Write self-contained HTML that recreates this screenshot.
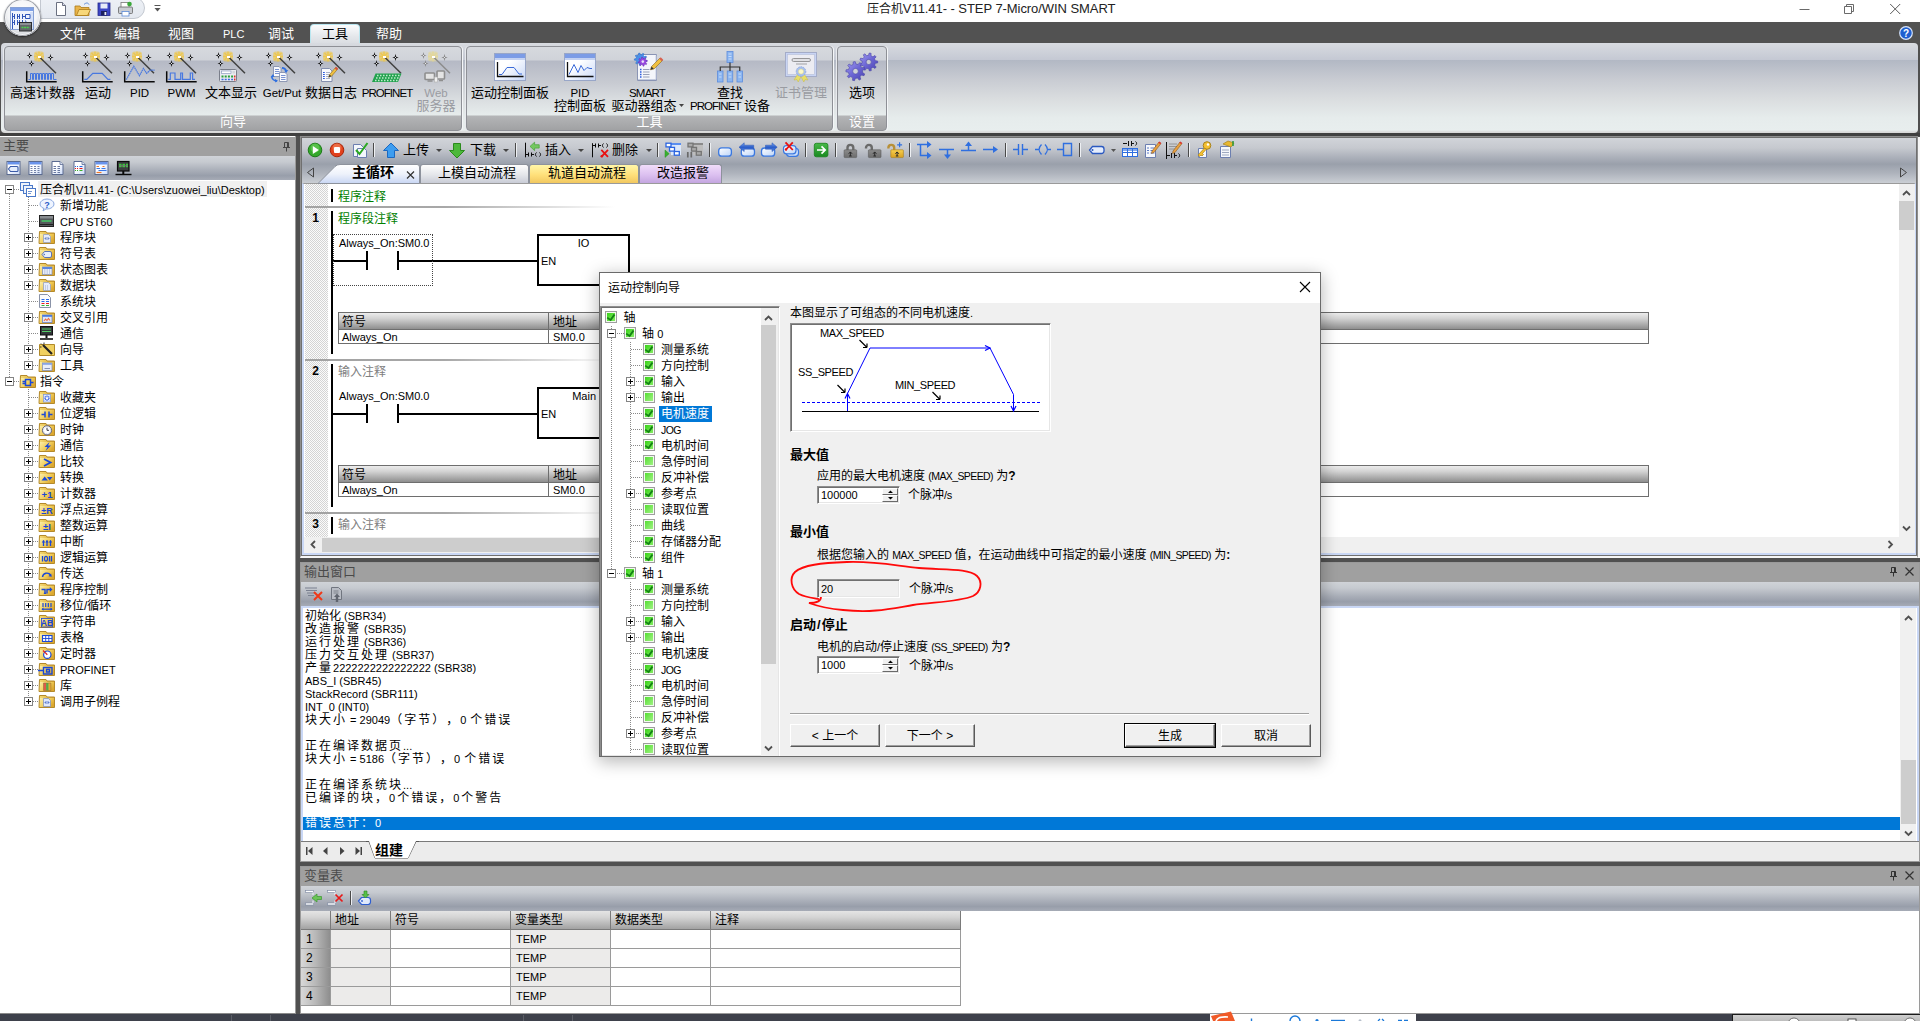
<!DOCTYPE html><html lang="zh-CN"><head><meta charset="utf-8"><title>压合机V11.41- - STEP 7-Micro/WIN SMART</title><style>

*{box-sizing:border-box;margin:0;padding:0}
html,body{width:1920px;height:1021px;overflow:hidden;background:#505050}
body{position:relative;font-family:"Liberation Sans","Noto Sans CJK SC",sans-serif;font-size:12px;color:#000;line-height:1}
.a{position:absolute}
.t{position:absolute;white-space:nowrap;line-height:16px;height:16px}
.c{text-align:center}
svg{position:absolute;overflow:visible}


#title{left:0;top:0;width:1920px;height:22px;background:#fff}
#menubar{left:0;top:22px;width:1920px;height:21px;background:#525252}
.mi{position:absolute;top:25px;height:17px;line-height:17px;font-size:13px;color:#fff;white-space:nowrap}
#ribbon{left:1px;top:43px;width:1917px;height:90px;border-radius:4px;background:linear-gradient(#d8dbe0 0,#c5c9d4 16.500px,#b2b8c4 17px,#c8cbd2 36px,#dadddf 56px,#e6ecec 75px,#e8eeee 87px,#d8d8d8 89px);}
.rg{position:absolute;top:46px;height:85px;border:1px solid #8e9096;border-radius:4px;background:linear-gradient(#d6d9de 0,#d0d3d9 13px,#b5b9c5 14px,#c8cbd2 36px,#dde1e3 56px,#e6ecec 68px,#b4b5b7 69px,#9fa0a2 84px);box-shadow:1px 0 0 #f4f6f8,-1px 0 0 #e8eaee}
.rcap{position:absolute;top:114px;height:16px;line-height:16px;font-size:13px;color:#fff;text-align:center;white-space:nowrap}
.rl{position:absolute;font-size:13px;line-height:13px;text-align:center;white-space:nowrap;color:#000;transform:translateX(-50%)}
.rl.g{color:#9a9ca2}


#lp{left:0;top:136px;width:296px;height:878px;background:#fff;border-right:1px solid #9a9a9a;border-bottom:1px solid #8a8a8a}
.ph{position:absolute;background:#a0a0a0;color:#4a4a4a;font-size:13px;line-height:18px;height:19px;padding-left:3px;white-space:nowrap}
.tb{position:absolute;background:linear-gradient(#d0d3d8 0,#c6cad0 25%,#a9aeb8 60%,#989eaa 82%,#a6abb6 100%)}
.tr{position:absolute;left:0;height:16px;line-height:18px;font-size:12px;white-space:nowrap}
.tr span.l{font-size:11px}
.ex{position:absolute;width:9px;height:9px;border:1px solid #848484;background:#fff}
.ex:before{content:"";position:absolute;left:1px;top:3px;width:5px;height:1px;background:#000}
.ex.p:after{content:"";position:absolute;left:3px;top:1px;width:1px;height:5px;background:#000}
.dv{position:absolute;width:1px;background-image:linear-gradient(#8a8a8a 50%,transparent 50%);background-size:1px 2px}
.dh{position:absolute;height:1px;background-image:linear-gradient(90deg,#8a8a8a 50%,transparent 50%);background-size:2px 1px}


#ed{left:300px;top:136px;width:1618px;height:422px;background:#fff;border:1px solid #8e8e8e;border-bottom:2px solid #f6f6f6;box-shadow:inset 0 0 0 1px #707070}
#edc{left:302px;top:183px;width:1614px;height:372px;border:2px solid #c9d7f5;border-top:1px solid #9a9a9a}
#edtb{left:302px;top:138px;width:1614px;height:45px;background:linear-gradient(#d1d4d9 0,#c6c9cf 22%,#a9aeb8 45%,#9aa0ab 58%,#aeb3bc 78%,#caced4 100%)}
.sep{position:absolute;top:143px;width:1px;height:14px;background:#4a4a4a;box-shadow:1px 0 0 #eef0f3}
.tbt{position:absolute;top:141px;height:17px;line-height:17px;font-size:13px;white-space:nowrap}
.dd{position:absolute;top:149px;width:0;height:0;border:3px solid transparent;border-top:3px solid #444;border-bottom:0}
.tab{position:absolute;top:164px;height:19px;border:1px solid #8d929c;border-bottom:0;border-radius:3px 3px 0 0}
.tabt{position:absolute;top:164px;height:17px;line-height:17px;font-size:13px;white-space:nowrap}
.lad{position:absolute;background:#000}
.st{position:absolute;border:1px solid #6e6e6e;background:#fff}
.sth{position:absolute;height:17px;background:linear-gradient(#ececec 0,#d2d2d2 35%,#8e8e8e 100%);border-bottom:1px solid #6e6e6e}
.lt{position:absolute;white-space:nowrap;font-size:11px;line-height:14px;height:14px}
.ct{position:absolute;white-space:nowrap;font-size:12px;line-height:14px;height:14px}
.vs{position:absolute;background:#f0f0f0}
.th{position:absolute;background:#cdcdcd}


.ol{text-spacing-trim:space-all;position:absolute;left:305px;height:13px;line-height:13px;font-size:12px;white-space:nowrap;letter-spacing:2px}
.ol i{font-style:normal;font-size:11px;letter-spacing:0}
.vh{position:absolute;top:911px;height:19px;line-height:18px;font-size:12px;padding-left:4px;white-space:nowrap;background:linear-gradient(#e4e4e4 0,#d4d4d4 35%,#a2a2a2 100%);border-right:1px solid #7a7a7a;border-bottom:1px solid #7a7a7a}
.vc{position:absolute;height:19px;line-height:18px;font-size:11px;padding-left:5px;white-space:nowrap;border-right:1px solid #9a9a9a;border-bottom:1px solid #9a9a9a;background:#fff}
.vn{background:linear-gradient(90deg,#d8d8d8 0,#b8b8b8 50%,#8e8e8e 100%);font-size:12px;padding-left:5px}
.vg{background:#ecebea}


#dlg{left:599px;top:272px;width:722px;height:485px;background:#f0f0f0;border:1px solid #6a6a6a;box-shadow:0 4px 16px 1px rgba(0,0,0,.28)}
#dlgt{left:600px;top:273px;width:720px;height:30px;background:#fff}
.dt{position:absolute;white-space:nowrap;font-size:12px;line-height:16px;height:16px}
.dt i{font-style:normal;font-size:11px;letter-spacing:-.2px}
.dt u{text-decoration:none;font-size:10.500px;letter-spacing:-.6px}
.db{font-weight:bold}
.cb{position:absolute;width:12px;height:12px;border:1px solid #9e9e9e;background:linear-gradient(135deg,#4cdc2a,#aaf48e);box-shadow:inset 0 0 0 1px #f2fbee}
.cb.k{background:linear-gradient(135deg,#2fd010,#8eee6c)}
.cb.k:after{content:"";position:absolute;left:0;top:0;width:10px;height:10px;background:#148214;clip-path:polygon(1.700px 4.900px,4.300px 6.800px,7.700px 1.900px,9.300px 3px,4.800px 9.300px,.700px 6.300px)}
.sunk{position:absolute;background:#fff;border:1px solid;border-color:#8e8e8e #fff #fff #8e8e8e;box-shadow:inset 1px 1px 0 #707070,inset -1px -1px 0 #e6e6e6}
.btn{position:absolute;height:23px;line-height:23px;font-size:12px;text-align:center;background:#f0f0f0;border:1px solid;border-color:#fff #5a5a5a #5a5a5a #fff;box-shadow:inset -1px -1px 0 #a0a0a0}

</style></head><body>
<div class="a" id="title"></div>
<div class="t" style="left:867px;top:0px;font-size:13px;line-height:17px;height:17px;color:#222;letter-spacing:-.06px"><span style="font-size:12px">压合机</span>V11.41- - STEP 7-Micro/WIN SMART</div>
<svg style="left:1790px;top:0" width="130" height="22" viewBox="0 0 130 22"><path d="M9.500 9.500h10" stroke="#6a6a6a" stroke-width="1" fill="none"/><path d="M54.500 6.500h7v7h-7zM56.500 6.500v-2h7v7h-2" stroke="#6a6a6a" stroke-width="1" fill="none"/><path d="M100.200 4l10 10M110.200 4l-10 10" stroke="#5a5a5a" stroke-width="1" fill="none"/></svg>
<div class="a" id="menubar"></div>
<div class="a" style="left:40px;top:-3px;width:105px;height:22px;border:1px solid #c3c8d0;border-radius:0 11px 11px 0;background:linear-gradient(#eef1f6,#e4e8ef)"></div>
<svg style="left:54px;top:1px" width="110" height="17" viewBox="0 0 110 17"><path d="M2.5 1.5h6l3 3v10h-9z" fill="#fff" stroke="#6a7080"/><path d="M8.5 1.5v3h3" fill="#dde" stroke="#6a7080"/><path d="M21 5h5l1 1.5h8v8h-14z" fill="#e9b44a" stroke="#a97a18" stroke-width=".8"/><path d="M22.5 14.5l2.5-6h11.5l-3 6z" fill="#f7d77a" stroke="#a97a18" stroke-width=".8"/><path d="M30 3.5c2-2 4-2 5 0" stroke="#5a8ad8" fill="none"/><rect x="44" y="2" width="12" height="12.5" fill="#3b45c4" stroke="#23298a" stroke-width=".8"/><rect x="46.5" y="2.5" width="7" height="5" fill="#e8ecf8"/><rect x="47" y="10" width="6" height="4.5" fill="#1c2060"/><rect x="50.5" y="11" width="1.8" height="3" fill="#e8ecf8"/><rect x="67" y="1.500" width="8" height="5" fill="#fff" stroke="#777" stroke-width=".8"/><rect x="64.5" y="6" width="14" height="6.5" rx="1" fill="#c9ccd2" stroke="#666" stroke-width=".8"/><rect x="68" y="10.5" width="7" height="4.5" fill="#fff" stroke="#5a8ad8" stroke-width=".8"/><circle cx="75.500" cy="3" r="2.300" fill="#3aa83a"/></svg>
<svg style="left:153px;top:4px" width="10" height="10" viewBox="0 0 10 10"><path d="M1.5 1.500h6" stroke="#555"/><path d="M1.500 4h6l-3 3.500z" fill="#555"/></svg>
<div class="a" style="left:4px;top:-1px;width:37px;height:37px;border-radius:50%;background:radial-gradient(circle at 50% 40%,#fff 0,#f4f5f7 50%,#d4d7dc 72%,#a4a7ae 92%,#8e9198 100%);box-shadow:0 1px 2px rgba(0,0,0,.6),inset 0 0 0 1px #9a9da4,inset 0 0 0 2px #f4f5f7"></div>
<svg style="left:10px;top:6px" width="24" height="26" viewBox="0 0 24 26"><rect x=".5" y="1.500" width="23" height="22" fill="#eef3fc" stroke="#86a0d4"/><rect x="1" y="2" width="22" height="3" fill="#7d9fe6"/><path d="M20 6h3v17h-3z" fill="#d4e0f8"/><path d="M2.500 7v16M2.500 10.500h2M4.500 8v5M7.500 8v5M7.500 10.500h2M9.500 8v5M12.500 8v5M12.500 10.500h3M15.500 8.500h4.500v4h-4.500zM2.500 16.500h2M4.500 14v5M7.500 14v5M7.500 16.500h2M9.500 14v5M12.500 14v5M12.500 16.500h1.500M15 14.500c1.500 1 2 2.500 .5 4" stroke="#2f55b8" fill="none"/><rect x="9.500" y="16.500" width="12" height="8.500" fill="#63676b" stroke="#2c2e30"/><rect x="10" y="17" width="11" height="2" fill="#8c9094"/><path d="M11.500 21.500h8" stroke="#4cd04c" stroke-width="1.600" stroke-dasharray="2 .6"/></svg>
<div class="mi" style="left:60px">文件</div>
<div class="mi" style="left:114px">编辑</div>
<div class="mi" style="left:168px">视图</div>
<div class="mi" style="left:268px">调试</div>
<div class="mi" style="left:376px">帮助</div>
<div class="mi" style="left:223px;font-size:11px;top:26px">PLC</div>
<div class="a" style="left:310px;top:24px;width:50px;height:20px;border-radius:4px 4px 0 0;border:1px solid #b9e6f0;border-bottom:0;background:linear-gradient(#fbfcfd,#e4e7eb 60%,#d9dce1)"></div>
<div class="mi" style="left:322px;color:#000">工具</div>
<svg style="left:1899px;top:26px" width="14" height="14" viewBox="0 0 14 14"><circle cx="7" cy="7" r="6.300" fill="#1f5fd0" stroke="#d8e4fa" stroke-width="1.200"/><text x="7" y="11" font-size="10" font-weight="bold" fill="#fff" text-anchor="middle" font-family="Liberation Sans,sans-serif">?</text></svg>
<div class="a" id="ribbon"></div>
<div class="rg" style="left:4px;width:458px"></div>
<div class="rg" style="left:466px;width:367px"></div>
<div class="rg" style="left:837px;width:50px"></div>
<div class="rcap" style="left:4px;width:458px">向导</div>
<div class="rcap" style="left:466px;width:367px">工具</div>
<div class="rcap" style="left:837px;width:50px">设置</div>
<div class="rl" style="left:42.5px;top:86px;font-size:13px">高速计数器</div>
<div class="rl" style="left:98px;top:86px;font-size:13px">运动</div>
<div class="rl" style="left:139.5px;top:86.5px;font-size:11.5px;letter-spacing:-.1px">PID</div>
<div class="rl" style="left:181.5px;top:86.5px;font-size:11.5px;letter-spacing:-.1px">PWM</div>
<div class="rl" style="left:231px;top:86px;font-size:13px">文本显示</div>
<div class="rl" style="left:282px;top:86.5px;font-size:11.5px;letter-spacing:-.1px">Get/Put</div>
<div class="rl" style="left:331px;top:86px;font-size:13px">数据日志</div>
<div class="rl" style="left:387px;top:86.5px;font-size:11.5px;letter-spacing:-.95px">PROFINET</div>
<div class="rl g" style="left:436px;top:87px;font-size:11.500px">Web</div><div class="rl g" style="left:436px;top:98.500px">服务器</div>
<div class="rl" style="left:510px;top:86px">运动控制面板</div>
<div class="rl" style="left:580px;top:87px;font-size:11.500px">PID</div><div class="rl" style="left:580px;top:98.500px">控制面板</div>
<div class="rl" style="left:647px;top:87px;font-size:11.500px;letter-spacing:-.8px">SMART</div><div class="rl" style="left:644px;top:98.500px">驱动器组态</div>
<svg style="left:679px;top:104px" width="6" height="4" viewBox="0 0 6 4"><path d="M0 0h5l-2.500 3z" fill="#444"/></svg>
<div class="rl" style="left:730px;top:86px">查找</div><div class="rl" style="left:730px;top:98.500px"><span style="font-size:11.500px;letter-spacing:-.95px">PROFINET</span> 设备</div>
<div class="rl g" style="left:801px;top:86px">证书管理</div>
<div class="rl" style="left:862px;top:86px">选项</div>
<svg style="left:26px;top:51px" width="32" height="32" viewBox="0 0 32 32"><rect x="8" y=".5" width="10" height="10" rx="2.500" fill="#f2c63c" opacity=".5"/><path d="M13 .5v10M8 5.500h10M9.500 2l7 7M16.500 2l-7 7" stroke="#f2c63c" stroke-width="1.500" opacity=".7"/><path d="M14 6.500L30 22.300" stroke="#404040" stroke-width="1.500" fill="none"/><rect x="12" y="5" width="3" height="2" fill="#fff"/><path d="M3.5 0.8999999999999999L4.2 3.8L6.5 4.5L4.2 5.2L3.5 8.1L2.8 5.2L0.4999999999999999 4.5L2.8 3.8Z" fill="#1a1a1a"/><rect x="3.0" y="4.0" width="1" height="1" fill="#e8eaee"/><path d="M5.5 8.9L6.2 11.8L8.5 12.5L6.2 13.2L5.5 16.1L4.8 13.2L2.5 12.5L4.8 11.8Z" fill="#1a1a1a"/><rect x="5.0" y="12.0" width="1" height="1" fill="#e8eaee"/><path d="M24.5 2.7L25.2 5.8L27.7 6.5L25.2 7.2L24.5 10.3L23.8 7.2L21.3 6.5L23.8 5.8Z" fill="#1a1a1a"/><rect x="24.0" y="6.0" width="1" height="1" fill="#e8eaee"/><path d="M.7 20.300v10.400h30" stroke="#0a0a0a" stroke-width="1.500" fill="none"/></svg>
<svg style="left:82px;top:51px" width="32" height="32" viewBox="0 0 32 32"><rect x="8" y=".5" width="10" height="10" rx="2.500" fill="#f2c63c" opacity=".5"/><path d="M13 .5v10M8 5.500h10M9.500 2l7 7M16.500 2l-7 7" stroke="#f2c63c" stroke-width="1.500" opacity=".7"/><path d="M14 6.500L30 22.300" stroke="#404040" stroke-width="1.500" fill="none"/><rect x="12" y="5" width="3" height="2" fill="#fff"/><path d="M3.5 0.8999999999999999L4.2 3.8L6.5 4.5L4.2 5.2L3.5 8.1L2.8 5.2L0.4999999999999999 4.5L2.8 3.8Z" fill="#1a1a1a"/><rect x="3.0" y="4.0" width="1" height="1" fill="#e8eaee"/><path d="M5.5 8.9L6.2 11.8L8.5 12.5L6.2 13.2L5.5 16.1L4.8 13.2L2.5 12.5L4.8 11.8Z" fill="#1a1a1a"/><rect x="5.0" y="12.0" width="1" height="1" fill="#e8eaee"/><path d="M24.5 2.7L25.2 5.8L27.7 6.5L25.2 7.2L24.5 10.3L23.8 7.2L21.3 6.5L23.8 5.8Z" fill="#1a1a1a"/><rect x="24.0" y="6.0" width="1" height="1" fill="#e8eaee"/><path d="M.7 20.300v10.400h30" stroke="#0a0a0a" stroke-width="1.500" fill="none"/></svg>
<svg style="left:124px;top:51px" width="32" height="32" viewBox="0 0 32 32"><rect x="8" y=".5" width="10" height="10" rx="2.500" fill="#f2c63c" opacity=".5"/><path d="M13 .5v10M8 5.500h10M9.500 2l7 7M16.500 2l-7 7" stroke="#f2c63c" stroke-width="1.500" opacity=".7"/><path d="M14 6.500L30 22.300" stroke="#404040" stroke-width="1.500" fill="none"/><rect x="12" y="5" width="3" height="2" fill="#fff"/><path d="M3.5 0.8999999999999999L4.2 3.8L6.5 4.5L4.2 5.2L3.5 8.1L2.8 5.2L0.4999999999999999 4.5L2.8 3.8Z" fill="#1a1a1a"/><rect x="3.0" y="4.0" width="1" height="1" fill="#e8eaee"/><path d="M5.5 8.9L6.2 11.8L8.5 12.5L6.2 13.2L5.5 16.1L4.8 13.2L2.5 12.5L4.8 11.8Z" fill="#1a1a1a"/><rect x="5.0" y="12.0" width="1" height="1" fill="#e8eaee"/><path d="M24.5 2.7L25.2 5.8L27.7 6.5L25.2 7.2L24.5 10.3L23.8 7.2L21.3 6.5L23.8 5.8Z" fill="#1a1a1a"/><rect x="24.0" y="6.0" width="1" height="1" fill="#e8eaee"/><path d="M.7 20.300v10.400h30" stroke="#0a0a0a" stroke-width="1.500" fill="none"/></svg>
<svg style="left:166px;top:51px" width="32" height="32" viewBox="0 0 32 32"><rect x="8" y=".5" width="10" height="10" rx="2.500" fill="#f2c63c" opacity=".5"/><path d="M13 .5v10M8 5.500h10M9.500 2l7 7M16.500 2l-7 7" stroke="#f2c63c" stroke-width="1.500" opacity=".7"/><path d="M14 6.500L30 22.300" stroke="#404040" stroke-width="1.500" fill="none"/><rect x="12" y="5" width="3" height="2" fill="#fff"/><path d="M3.5 0.8999999999999999L4.2 3.8L6.5 4.5L4.2 5.2L3.5 8.1L2.8 5.2L0.4999999999999999 4.5L2.8 3.8Z" fill="#1a1a1a"/><rect x="3.0" y="4.0" width="1" height="1" fill="#e8eaee"/><path d="M5.5 8.9L6.2 11.8L8.5 12.5L6.2 13.2L5.5 16.1L4.8 13.2L2.5 12.5L4.8 11.8Z" fill="#1a1a1a"/><rect x="5.0" y="12.0" width="1" height="1" fill="#e8eaee"/><path d="M24.5 2.7L25.2 5.8L27.7 6.5L25.2 7.2L24.5 10.3L23.8 7.2L21.3 6.5L23.8 5.8Z" fill="#1a1a1a"/><rect x="24.0" y="6.0" width="1" height="1" fill="#e8eaee"/><path d="M.7 20.300v10.400h30" stroke="#0a0a0a" stroke-width="1.500" fill="none"/></svg>
<svg style="left:215px;top:51px" width="32" height="32" viewBox="0 0 32 32"><rect x="8" y=".5" width="10" height="10" rx="2.500" fill="#f2c63c" opacity=".5"/><path d="M13 .5v10M8 5.500h10M9.500 2l7 7M16.500 2l-7 7" stroke="#f2c63c" stroke-width="1.500" opacity=".7"/><path d="M14 6.500L30 22.300" stroke="#404040" stroke-width="1.500" fill="none"/><rect x="12" y="5" width="3" height="2" fill="#fff"/><path d="M3.5 0.8999999999999999L4.2 3.8L6.5 4.5L4.2 5.2L3.5 8.1L2.8 5.2L0.4999999999999999 4.5L2.8 3.8Z" fill="#1a1a1a"/><rect x="3.0" y="4.0" width="1" height="1" fill="#e8eaee"/><path d="M5.5 8.9L6.2 11.8L8.5 12.5L6.2 13.2L5.5 16.1L4.8 13.2L2.5 12.5L4.8 11.8Z" fill="#1a1a1a"/><rect x="5.0" y="12.0" width="1" height="1" fill="#e8eaee"/><path d="M24.5 2.7L25.2 5.8L27.7 6.5L25.2 7.2L24.5 10.3L23.8 7.2L21.3 6.5L23.8 5.8Z" fill="#1a1a1a"/><rect x="24.0" y="6.0" width="1" height="1" fill="#e8eaee"/></svg>
<svg style="left:265px;top:51px" width="32" height="32" viewBox="0 0 32 32"><rect x="8" y=".5" width="10" height="10" rx="2.500" fill="#f2c63c" opacity=".5"/><path d="M13 .5v10M8 5.500h10M9.500 2l7 7M16.500 2l-7 7" stroke="#f2c63c" stroke-width="1.500" opacity=".7"/><path d="M14 6.500L30 22.300" stroke="#404040" stroke-width="1.500" fill="none"/><rect x="12" y="5" width="3" height="2" fill="#fff"/><path d="M3.5 0.8999999999999999L4.2 3.8L6.5 4.5L4.2 5.2L3.5 8.1L2.8 5.2L0.4999999999999999 4.5L2.8 3.8Z" fill="#1a1a1a"/><rect x="3.0" y="4.0" width="1" height="1" fill="#e8eaee"/><path d="M5.5 8.9L6.2 11.8L8.5 12.5L6.2 13.2L5.5 16.1L4.8 13.2L2.5 12.5L4.8 11.8Z" fill="#1a1a1a"/><rect x="5.0" y="12.0" width="1" height="1" fill="#e8eaee"/><path d="M24.5 2.7L25.2 5.8L27.7 6.5L25.2 7.2L24.5 10.3L23.8 7.2L21.3 6.5L23.8 5.8Z" fill="#1a1a1a"/><rect x="24.0" y="6.0" width="1" height="1" fill="#e8eaee"/></svg>
<svg style="left:315px;top:51px" width="32" height="32" viewBox="0 0 32 32"><rect x="8" y=".5" width="10" height="10" rx="2.500" fill="#f2c63c" opacity=".5"/><path d="M13 .5v10M8 5.500h10M9.500 2l7 7M16.500 2l-7 7" stroke="#f2c63c" stroke-width="1.500" opacity=".7"/><path d="M14 6.500L30 22.300" stroke="#404040" stroke-width="1.500" fill="none"/><rect x="12" y="5" width="3" height="2" fill="#fff"/><path d="M3.5 0.8999999999999999L4.2 3.8L6.5 4.5L4.2 5.2L3.5 8.1L2.8 5.2L0.4999999999999999 4.5L2.8 3.8Z" fill="#1a1a1a"/><rect x="3.0" y="4.0" width="1" height="1" fill="#e8eaee"/><path d="M5.5 8.9L6.2 11.8L8.5 12.5L6.2 13.2L5.5 16.1L4.8 13.2L2.5 12.5L4.8 11.8Z" fill="#1a1a1a"/><rect x="5.0" y="12.0" width="1" height="1" fill="#e8eaee"/><path d="M24.5 2.7L25.2 5.8L27.7 6.5L25.2 7.2L24.5 10.3L23.8 7.2L21.3 6.5L23.8 5.8Z" fill="#1a1a1a"/><rect x="24.0" y="6.0" width="1" height="1" fill="#e8eaee"/></svg>
<svg style="left:371px;top:51px" width="32" height="32" viewBox="0 0 32 32"><rect x="8" y=".5" width="10" height="10" rx="2.500" fill="#f2c63c" opacity=".5"/><path d="M13 .5v10M8 5.500h10M9.500 2l7 7M16.500 2l-7 7" stroke="#f2c63c" stroke-width="1.500" opacity=".7"/><path d="M14 6.500L30 22.300" stroke="#404040" stroke-width="1.500" fill="none"/><rect x="12" y="5" width="3" height="2" fill="#fff"/><path d="M3.5 0.8999999999999999L4.2 3.8L6.5 4.5L4.2 5.2L3.5 8.1L2.8 5.2L0.4999999999999999 4.5L2.8 3.8Z" fill="#1a1a1a"/><rect x="3.0" y="4.0" width="1" height="1" fill="#e8eaee"/><path d="M5.5 8.9L6.2 11.8L8.5 12.5L6.2 13.2L5.5 16.1L4.8 13.2L2.5 12.5L4.8 11.8Z" fill="#1a1a1a"/><rect x="5.0" y="12.0" width="1" height="1" fill="#e8eaee"/><path d="M24.5 2.7L25.2 5.8L27.7 6.5L25.2 7.2L24.5 10.3L23.8 7.2L21.3 6.5L23.8 5.8Z" fill="#1a1a1a"/><rect x="24.0" y="6.0" width="1" height="1" fill="#e8eaee"/></svg>
<svg style="left:420px;top:51px" width="32" height="32" viewBox="0 0 32 32"><rect x="8" y=".5" width="10" height="10" rx="2.500" fill="#e6d890" opacity=".5"/><path d="M13 .5v10M8 5.500h10M9.500 2l7 7M16.500 2l-7 7" stroke="#e6d890" stroke-width="1.500" opacity=".7"/><path d="M14 6.500L30 22.300" stroke="#8c8c8c" stroke-width="1.500" fill="none"/><rect x="12" y="5" width="3" height="2" fill="#fff"/><path d="M3.5 0.8999999999999999L4.2 3.8L6.5 4.5L4.2 5.2L3.5 8.1L2.8 5.2L0.4999999999999999 4.5L2.8 3.8Z" fill="#8a8a8a"/><rect x="3.0" y="4.0" width="1" height="1" fill="#e8eaee"/><path d="M5.5 8.9L6.2 11.8L8.5 12.5L6.2 13.2L5.5 16.1L4.8 13.2L2.5 12.5L4.8 11.8Z" fill="#8a8a8a"/><rect x="5.0" y="12.0" width="1" height="1" fill="#e8eaee"/><path d="M24.5 2.7L25.2 5.8L27.7 6.5L25.2 7.2L24.5 10.3L23.8 7.2L21.3 6.5L23.8 5.8Z" fill="#8a8a8a"/><rect x="24.0" y="6.0" width="1" height="1" fill="#e8eaee"/></svg>
<svg style="left:26px;top:51px" width="32" height="32" viewBox="0 0 32 32"><path d="M2.500 28.500H4.5V22.500H6.5V28.500H7.5V22.500H9.5V28.500H10.5V22.500H12.5V28.500H13.5V22.500H15.5V28.500H16.5V22.500H18.5V28.500H19.5V22.500H21.5V28.500H22.5V22.500H24.5V28.500H25.5V22.500H27.5V28.500H30.500" stroke="#4878e0" stroke-width="1" fill="none"/></svg>
<svg style="left:82px;top:51px" width="32" height="32" viewBox="0 0 32 32"><path d="M2.300 28.300h2.500l6-6h9.400l5.700 6h2.500" stroke="#4878e0" stroke-width="1.200" fill="none"/></svg>
<svg style="left:124px;top:51px" width="32" height="32" viewBox="0 0 32 32"><path d="M2.300 28.600l7.500-13.300 5.700 9.400 3.900-7.300 3.200 4.900 3.600-3.100h4.400" stroke="#4878e0" stroke-width="1.200" fill="none" stroke-dasharray="1.600 .5"/></svg>
<svg style="left:166px;top:51px" width="32" height="32" viewBox="0 0 32 32"><path d="M2.300 28.300h2v-6.300h4.700v6.300h5.700v-6.300h1.800v6.300h7.800v-6.300h2.300v6.300h2.400" stroke="#4878e0" stroke-width="1.200" fill="none"/></svg>
<svg style="left:219px;top:69px" width="18" height="13" viewBox="0 0 18 13"><rect x=".5" y=".5" width="17" height="12" rx="1" fill="#e9ebf0" stroke="#7a7e8a"/><rect x="2.500" y="2" width="9.500" height="2.500" fill="#fff" stroke="#7a8cb8" stroke-width=".6"/><rect x="13.500" y="2" width="2.500" height="2.500" fill="#d4d6dc"/><path d="M2.500 7.500h2M5.700 7.500h2M8.900 7.500h2M12.100 7.500h2" stroke="#2aa03a" stroke-width="1.900"/><path d="M15 7.500h1.500M15 10.500h1.500" stroke="#e03030" stroke-width="1.900"/><path d="M2.500 10.500h2M5.700 10.500h2M8.900 10.500h2M12.100 10.500h2" stroke="#3a6ae0" stroke-width="1.700"/></svg>
<svg style="left:270px;top:66px" width="18" height="16" viewBox="0 0 18 16"><path d="M3.500 .5h5.500l2 2v8h-7.500z" fill="#f8f9fd" stroke="#7a86a8" stroke-width=".8"/><path d="M5 3.500h4M5 5.500h4.500M5 7.500h4.500" stroke="#6a86cc" stroke-width=".9"/><path d="M9.500 6.500h5.500l2 2v7h-7.500z" fill="#f8f9fd" stroke="#7a86a8" stroke-width=".8"/><path d="M11 9.500h4.500M11 11.500h4.500M11 13.500h4.500" stroke="#6a86cc" stroke-width=".9"/><path d="M12 1.800a4.500 4.500 0 0 1 4.300 3.200" stroke="#2f6fe0" stroke-width="1.700" fill="none"/><path d="M14.300 4.600l4-.6-2.300 3.300z" fill="#2f6fe0"/><path d="M7 14.800a5 5 0 0 1-5.300-4.300" stroke="#2f6fe0" stroke-width="1.700" fill="none"/><path d="M4.500 10.800l-4 .4 2.500-3.300z" fill="#2f6fe0"/><path d="M5 13l3 1.800-2.800 1.800z" fill="#2f6fe0"/></svg>
<svg style="left:320px;top:66px" width="19" height="16" viewBox="0 0 19 16"><path d="M1.500 2.500h8l2.500 2.500v10.500h-10.500z" fill="#f8f9fd" stroke="#7a86a8" stroke-width=".9"/><path d="M3 6.500h1.800M3 8.500h1.800M3 10.500h1.800M3 12.500h1.800" stroke="#2a5ae0" stroke-width="1.200"/><path d="M6 6.500h4M6 8.500h3M6 10.500h3.500M6 12.500h4" stroke="#a0a8c0" stroke-width=".9"/><path d="M8.700 11.300l.8-2.700 6.300-7.400 2 1.700-6.300 7.400z" fill="#f0c040" stroke="#8a6a20" stroke-width=".6"/><path d="M15.400 1.700l2 1.700" stroke="#d85040" stroke-width="2.200"/><path d="M8.700 11.300l.8-2.700 1.900 1.600z" fill="#333"/></svg>
<svg style="left:372px;top:73px" width="30" height="10" viewBox="0 0 30 10"><path d="M3.500 .5h26l-3.500 8.500h-26z" fill="#22a24e"/><path d="M5 2.500h1.500M8 2.500h1.500M11 2.500h1.500M14 2.500h1.500M17 2.500h1.500M20 2.500h1.500M23 2.500h1.500M26 2.500h1.500M4 5h1.500M7 5h1.500M10 5h1.500M13 5h1.500M16 5h1.500M19 5h1.500M22 5h1.500M25 5h1.500M3 7.500h1.500M6 7.500h1.500M9 7.500h1.500M12 7.500h1.500M15 7.500h1.500M18 7.500h1.500M21 7.500h1.500M24 7.500h1.500" stroke="#bfeccc" stroke-width="1.300"/></svg>
<svg style="left:424px;top:70px" width="22" height="13" viewBox="0 0 22 13"><rect x="1" y="3" width="9.500" height="6.500" rx=".8" fill="#e4e4e4" stroke="#8e8e8e" stroke-width="1.600"/><rect x="13" y="1" width="7.500" height="8" rx=".8" fill="#e4e4e4" stroke="#8e8e8e" stroke-width="1.600"/><path d="M3.500 11h5M15 10.500h4" stroke="#8e8e8e" stroke-width="1.300"/><rect x="10.500" y="7" width="3" height="5" fill="#f0f0f0" stroke="#b0b0b0" stroke-width=".6"/></svg>
<svg width="0" height="0"><defs><linearGradient id="wg" x1="0" y1="0" x2="1" y2="1"><stop offset=".4" stop-color="#fff"/><stop offset="1" stop-color="#c8d8f8"/></linearGradient></defs></svg>
<svg style="left:494px;top:53px" width="32" height="28" viewBox="0 0 32 28"><rect x=".5" y=".5" width="31" height="27" fill="url(#wg)" stroke="#98a6c8"/><rect x="1" y="1" width="30" height="4" fill="#7c9ce6"/><rect x="1" y="5" width="30" height="2" fill="#c4d2f2"/><path d="M3.500 9v14.500h26" stroke="#111" stroke-width="1.300" fill="none"/><path d="M5 21.500h3l5-7h7l5 6.500h3" stroke="#3a6ad8" fill="none"/></svg>
<svg style="left:564px;top:53px" width="32" height="28" viewBox="0 0 32 28"><rect x=".5" y=".5" width="31" height="27" fill="url(#wg)" stroke="#98a6c8"/><rect x="1" y="1" width="30" height="4" fill="#7c9ce6"/><rect x="1" y="5" width="30" height="2" fill="#c4d2f2"/><path d="M3.500 9v14.500h26" stroke="#111" stroke-width="1.300" fill="none"/><path d="M5 21.500l5-10 4 8 3-7 3 5 3-3 3 1h2" stroke="#3a6ad8" fill="none"/></svg>
<svg style="left:632px;top:51px" width="32" height="30" viewBox="0 0 32 30"><path d="M5.500 3.500h19v26h-19z" fill="#f4f6fb" stroke="#8a94b4"/><path d="M6 28.500h18v-24" stroke="#c4cce0" fill="none"/><path d="M8 18.500h1.500M8 21h1.500M8 23.500h1.500M8 26h1.500" stroke="#2a5ae0" stroke-width="1.300"/><path d="M11 18.500h6.500M11 21h6.500M11 23.500h6.500M11 26h6.500" stroke="#98a0b8" stroke-width="1"/><path d="M13.2 8.7L14.8 9.4L14.4 10.6L12.7 10.3L11.8 11.5L12.6 13.1L11.5 13.8L10.4 12.4L8.9 12.8L8.5 14.5L7.2 14.3L7.2 12.6L5.9 11.9L4.5 13.0L3.6 12.0L4.7 10.7L4.1 9.3L2.4 9.2L2.3 7.9L4.0 7.6L4.5 6.2L3.2 5.0L4.0 3.9L5.5 4.8L6.7 4.0L6.5 2.3L7.8 2.0L8.4 3.6L9.8 3.8L10.8 2.3L12.0 2.9L11.4 4.5L12.4 5.6L14.1 5.1L14.6 6.3L13.1 7.2Z" fill="#4a90e8" stroke="#2a68c0" stroke-width=".5"/><path d="M13.7 11.8L14.8 12.8L14.2 13.7L13.0 12.9L12.0 13.6L12.1 15.0L11.1 15.2L10.7 13.8L9.6 13.5L8.6 14.6L7.7 14.0L8.5 12.8L7.8 11.8L6.4 11.9L6.2 10.9L7.6 10.5L7.9 9.4L6.8 8.4L7.4 7.5L8.6 8.3L9.6 7.6L9.5 6.2L10.5 6.0L10.9 7.4L12.0 7.7L13.0 6.6L13.9 7.2L13.1 8.4L13.8 9.4L15.2 9.3L15.4 10.3L14.0 10.7Z" fill="#9a4ae0" stroke="#6a28b0" stroke-width=".5"/><circle cx="10.800" cy="10.600" r="1.300" fill="#e8e0f8"/><path d="M18.500 18.800l1-3.300 8.500-8.500 2.500 2.500-8.500 8.500z" fill="#f0c040" stroke="#8a6a20" stroke-width=".6"/><path d="M28 7l2.500 2.500" stroke="#d86050" stroke-width="2.200"/><path d="M18.500 18.800l1-3.300 2.300 2.300z" fill="#333"/></svg>
<svg style="left:716px;top:51px" width="28" height="32" viewBox="0 0 28 32"><g fill="#8cb6f0" stroke="#5c8cdc" stroke-width=".8"><rect x="11" y=".5" width="6" height="11"/><rect x="1.500" y="20" width="5.500" height="11"/><rect x="11.250" y="20" width="5.500" height="11"/><rect x="21" y="20" width="5.500" height="11"/></g><path d="M14 11.500v8.500M4.250 20v-4h19.500v4" stroke="#333" stroke-width="1.200" fill="none"/><path d="M12.500 3h3M12.500 5.500h3M12.500 8h3M3 23h2.500M3 26h2.500M12.700 23h2.600M12.700 26h2.600M22.500 23h2.500M22.500 26h2.500" stroke="#cfe0fa" stroke-width=".9"/></svg>
<svg style="left:785px;top:51px" width="32" height="32" viewBox="0 0 32 32"><rect x=".5" y="1.500" width="31" height="24" fill="#c8d4f4" stroke="#a4acc8"/><rect x="2.500" y="3.500" width="27" height="20" fill="#ececf2" stroke="#b4bcd8" stroke-width=".6"/><rect x="7" y="7.500" width="18.500" height="3" rx="1.500" fill="#e0e0e4" stroke="#8c8c90" stroke-width=".9"/><path d="M11 13h11" stroke="#a0a0a4"/><path d="M12.500 23.500l-3.500 5.500 3-.4 1.200 2.400 2.600-5M19.500 23.500l3.500 5.500-3-.4-1.200 2.400-2.600-5" fill="#e8de68" stroke="#c8bc48" stroke-width=".5"/><circle cx="16" cy="20.500" r="4.800" fill="#a8c0ee" stroke="#8ca4d8" stroke-width=".8" stroke-dasharray="1.600 .8"/><circle cx="16" cy="20.500" r="2.600" fill="#fbf8c8" stroke="#d8d088" stroke-width=".5"/></svg>
<svg style="left:845px;top:51px" width="34" height="32" viewBox="0 0 34 32"><defs><linearGradient id="gg" x1="0" y1="0" x2="1" y2="1"><stop offset="0" stop-color="#a29cf0"/><stop offset=".5" stop-color="#6c66d4"/><stop offset="1" stop-color="#4a44b0"/></linearGradient></defs><path d="M29.6 14.2L31.2 16.0L30.0 17.4L28.0 16.2L26.1 17.2L26.3 19.6L24.4 20.0L23.7 17.7L21.6 17.3L20.1 19.3L18.5 18.3L19.4 16.1L18.0 14.5L15.6 15.0L15.0 13.3L17.1 12.1L17.1 10.0L14.9 8.9L15.6 7.1L17.9 7.6L19.3 6.0L18.3 3.8L20.0 2.8L21.4 4.7L23.5 4.3L24.2 2.0L26.1 2.3L26.0 4.7L27.9 5.8L29.9 4.5L31.1 5.9L29.5 7.7L30.3 9.7L32.6 10.0L32.7 11.9L30.3 12.2Z" fill="url(#gg)" stroke="#4a44a8" stroke-width=".6" stroke-linejoin="round"/><circle cx="23.700" cy="11" r="2.600" fill="#c9ccd3" stroke="#4a44a8" stroke-width=".6"/><path d="M17.6 21.6L19.7 22.9L19.0 24.7L16.5 24.1L15.0 25.8L15.8 28.2L14.1 29.1L12.6 27.1L10.3 27.4L9.5 29.7L7.5 29.3L7.7 26.8L5.7 25.6L3.6 26.8L2.3 25.3L4.1 23.5L3.4 21.3L0.9 20.8L1.0 18.8L3.5 18.6L4.4 16.4L2.8 14.5L4.1 13.0L6.2 14.4L8.2 13.4L8.2 10.9L10.2 10.6L10.9 13.0L13.1 13.5L14.7 11.6L16.4 12.7L15.4 14.9L16.8 16.8L19.3 16.3L19.9 18.2L17.6 19.3Z" fill="url(#gg)" stroke="#4a44a8" stroke-width=".6" stroke-linejoin="round"/><circle cx="10.500" cy="20.200" r="2.800" fill="#cfd2d8" stroke="#4a44a8" stroke-width=".6"/></svg>
<div class="a" style="left:0;top:133px;width:1920px;height:3px;background:#404040"></div>
<div class="a" id="lp"></div>
<svg width="0" height="0"><defs><linearGradient id="fg1" x1="0" y1="0" x2="1" y2="0"><stop offset="0" stop-color="#f6dc78"/><stop offset="1" stop-color="#d8a42c"/></linearGradient><linearGradient id="fg2" x1="0" y1="0" x2="1" y2=".6"><stop offset="0" stop-color="#fbeeaa"/><stop offset=".6" stop-color="#f0cc58"/><stop offset="1" stop-color="#dca830"/></linearGradient></defs></svg>
<div class="ph" style="left:0;top:137px;width:295px">主要</div>
<svg style="left:282px;top:142px" width="9" height="10" viewBox="0 0 9 10"><path d="M2.500 .5h4v5h-4zM5.500 .5v5M1 5.500h7M4.500 5.500v4" stroke="#444" fill="none"/></svg>
<div class="tb" style="left:0;top:156px;width:295px;height:24px"></div>
<svg style="left:4px;top:159px" width="140" height="18" viewBox="0 0 140 18"><rect x="3.0" y="2.500" width="13" height="13" fill="url(#wg)" stroke="#5a6a90"/><rect x="3.5" y="3" width="12" height="2.500" fill="#6a94ec"/><path d="M6.500 7.5h6.500a1 1 0 0 1 1 1v3a1 1 0 0 1-1 1h-6.500l-2-2.500z" fill="#e6eefc" stroke="#3a5aa8" stroke-width="1.100"/><rect x="25.0" y="2.500" width="13" height="13" fill="url(#wg)" stroke="#5a6a90"/><rect x="25.5" y="3" width="12" height="2.500" fill="#6a94ec"/><path d="M26.500 7.5h2M30 7.5h2M33.500 7.5h2M26.500 9.5h2M30 9.5h2M33.500 9.5h2M26.500 11.5h2M30 11.5h2M33.500 11.5h2M26.500 13.5h2M30 13.5h2M33.500 13.5h2" stroke="#7080a8" stroke-width="1"/><path d="M48.0 2.5h8l3 3v10h-11z" fill="url(#wg)" stroke="#5a6a90"/><path d="M56.0 2.500v3h3" fill="#dfe6f8" stroke="#5a6a90" stroke-width=".8"/><path d="M49.500 7.5h2.500M53.500 7.5h2.500M49.500 9.5h2.500M53.500 9.5h2.500M49.500 11.5h2.500M53.500 11.5h2.500M49.500 13.5h2.500M53.500 13.5h2.500" stroke="#6878a0" stroke-width="1"/><path d="M70.0 2.5h8l3 3v10h-11z" fill="url(#wg)" stroke="#5a6a90"/><path d="M78.0 2.500v3h3" fill="#dfe6f8" stroke="#5a6a90" stroke-width=".8"/><path d="M71 7.5h1M73 7.5h1M75.500 7.5h3" stroke="#2a6ae0" stroke-width="1.200"/><path d="M71 9.5h1M73 9.5h1M75.500 9.5h3" stroke="#e81818" stroke-width="1.200"/><path d="M71 11.5h1M73 11.5h1M75.500 11.5h3" stroke="#38b028" stroke-width="1.200"/><rect x="91.0" y="2.500" width="13" height="13" fill="url(#wg)" stroke="#5a6a90"/><rect x="91.5" y="3" width="12" height="2.500" fill="#6a94ec"/><path d="M92.500 7.5h2.500M98.500 7.5h2" stroke="#f07828" stroke-width="1.200"/><path d="M92.500 9.5h3.500M97.500 9.5h4M94.500 11.5h8" stroke="#3a78e8" stroke-width="1.200"/><path d="M92.500 13.5h5" stroke="#f07828" stroke-width="1.200"/><rect x="113.500" y="2.500" width="11.500" height="9.500" fill="#3c3e40" stroke="#0a0a0a" stroke-width="1.200"/><path d="M115 5.5h2.500M118.500 5.5h2.500M122 5.5h2M115 7.5h2.500M118.500 7.5h2.500M122 7.5h2" stroke="#38c838" stroke-width="1.400"/><path d="M115 6.8h9" stroke="#888" stroke-width=".8"/><path d="M119.300 12v3" stroke="#0a0a0a" stroke-width="2"/><path d="M111.500 15.5h16" stroke="#0a0a0a" stroke-width="1.400"/></svg>
<div class="dv" style="left:9px;top:194px;height:188px"></div>
<div class="dv" style="left:28px;top:197px;height:168px"></div>
<div class="dv" style="left:28px;top:387px;height:314px"></div>
<div class="dh" style="left:14px;top:189px;width:6px"></div>
<div class="ex " style="left:5px;top:185px"></div>
<svg style="left:20px;top:182px" width="16" height="15" viewBox="0 0 16 15"><rect x=".5" y=".5" width="9" height="8" fill="#eef3fb" stroke="#4a78c8"/><rect x="3.500" y="3.500" width="9" height="8" fill="#eef3fb" stroke="#4a78c8"/><rect x="6.500" y="6.500" width="9" height="8" fill="#fff" stroke="#4a78c8"/><path d="M8 9.500h4M8 11.500h3" stroke="#4a78c8" stroke-width=".8"/></svg>
<div class="a" style="left:38px;top:181px;width:229px;height:16px;background:#f0f0f0"></div>
<div class="tr" style="left:40px;top:181px">压合机<span class="l">V11.41- (C:\Users\zuowei_liu\Desktop)</span></div>
<div class="dh" style="left:29px;top:205px;width:10px"></div>
<svg style="left:39px;top:198px" width="16" height="14" viewBox="0 0 16 14"><ellipse cx="8" cy="6" rx="7" ry="5" fill="#eef4ff" stroke="#8aa8e0"/><path d="M5 10l-1 3 3.500-2.500" fill="#eef4ff" stroke="#8aa8e0"/><text x="8" y="9.500" font-size="9" font-weight="bold" fill="#2a5ac8" text-anchor="middle" font-family="Liberation Sans,sans-serif">?</text></svg>
<div class="tr" style="left:60px;top:197px">新增功能</div>
<div class="dh" style="left:29px;top:221px;width:10px"></div>
<svg style="left:39px;top:215px" width="15" height="12" viewBox="0 0 15 12"><rect x=".5" y=".5" width="14" height="11" fill="#55595c" stroke="#222"/><rect x="1" y="1" width="13" height="2.500" fill="#888c90"/><path d="M2.500 6h10" stroke="#4c6" stroke-width="1.500"/><path d="M1 9.500h13" stroke="#222" stroke-width="1"/></svg>
<div class="tr" style="left:60px;top:213px"><span class="l">CPU ST60</span></div>
<div class="dh" style="left:33px;top:237px;width:6px"></div>
<div class="ex p" style="left:24px;top:233px"></div>
<svg style="left:39px;top:230px" width="16" height="14" viewBox="0 0 16 14"><path d="M.5 1.500h6.500l1 1.500h7.500v10.500h-15.500z" fill="url(#fg1)" stroke="#b48a2c"/><path d="M1 4h14v9h-14z" fill="url(#fg2)"/><path d="M4.500 4.500h5l2 2v6h-7z" fill="#e6ecfa" stroke="#8a98c0" stroke-width=".7"/><path d="M5.500 8.500h1.500M7 7v3M9 7v3M9 8.500h1.500" stroke="#5a78c0" stroke-width=".8"/></svg>
<div class="tr" style="left:60px;top:229px">程序块</div>
<div class="dh" style="left:33px;top:253px;width:6px"></div>
<div class="ex p" style="left:24px;top:249px"></div>
<svg style="left:39px;top:246px" width="16" height="14" viewBox="0 0 16 14"><path d="M.5 1.500h6.500l1 1.500h7.500v10.500h-15.500z" fill="url(#fg1)" stroke="#b48a2c"/><path d="M1 4h14v9h-14z" fill="url(#fg2)"/><path d="M5.500 5.500h5.500a1.500 1.500 0 0 1 1.500 1.500v3a1.500 1.500 0 0 1-1.500 1.500h-5.500l-2.500-3z" fill="#e6eefc" stroke="#4a68b8" stroke-width=".9"/><circle cx="5.300" cy="8.500" r=".7" fill="#4a68b8"/></svg>
<div class="tr" style="left:60px;top:245px">符号表</div>
<div class="dh" style="left:33px;top:269px;width:6px"></div>
<div class="ex p" style="left:24px;top:265px"></div>
<svg style="left:39px;top:262px" width="16" height="14" viewBox="0 0 16 14"><path d="M.5 1.500h6.500l1 1.500h7.500v10.500h-15.500z" fill="url(#fg1)" stroke="#b48a2c"/><path d="M1 4h14v9h-14z" fill="url(#fg2)"/><rect x="3.500" y="5" width="9.500" height="7.500" fill="#e8eefb" stroke="#7888b8" stroke-width=".7"/><rect x="3.500" y="5" width="9.500" height="2" fill="#5a86e0"/><path d="M5.800 7v5.500M8.200 7v5.500M10.600 7v5.500" stroke="#a8b4d4" stroke-width=".7"/></svg>
<div class="tr" style="left:60px;top:261px">状态图表</div>
<div class="dh" style="left:33px;top:285px;width:6px"></div>
<div class="ex p" style="left:24px;top:281px"></div>
<svg style="left:39px;top:278px" width="16" height="14" viewBox="0 0 16 14"><path d="M.5 1.500h6.500l1 1.500h7.500v10.500h-15.500z" fill="url(#fg1)" stroke="#b48a2c"/><path d="M1 4h14v9h-14z" fill="url(#fg2)"/><path d="M4.500 4.500h5l2 2v6h-7z" fill="#e6ecfa" stroke="#8a98c0" stroke-width=".7"/><path d="M6.500 7v5M8.500 7v5" stroke="#b8c4e0" stroke-width=".8"/></svg>
<div class="tr" style="left:60px;top:277px">数据块</div>
<div class="dh" style="left:29px;top:301px;width:10px"></div>
<svg style="left:39px;top:294px" width="13" height="14" viewBox="0 0 13 14"><path d="M.5 .5h8l3 3v10h-11z" fill="#fafbfe" stroke="#8a93a8"/><path d="M2.500 5.500h3M7 5.500h3M2.500 7.500h3M7 7.500h3" stroke="#2a6ae8"/><path d="M2.500 9.500h3M7 9.500h3" stroke="#e82020"/><path d="M2.500 11.500h3M7 11.500h3" stroke="#38b038"/></svg>
<div class="tr" style="left:60px;top:293px">系统块</div>
<div class="dh" style="left:33px;top:317px;width:6px"></div>
<div class="ex p" style="left:24px;top:313px"></div>
<svg style="left:39px;top:310px" width="16" height="14" viewBox="0 0 16 14"><path d="M.5 1.500h6.500l1 1.500h7.500v10.500h-15.500z" fill="url(#fg1)" stroke="#b48a2c"/><path d="M1 4h14v9h-14z" fill="url(#fg2)"/><rect x="3.500" y="5" width="9.500" height="7.500" fill="#dfe8fb" stroke="#5a78c8" stroke-width=".7"/><rect x="3.500" y="5" width="9.500" height="1.800" fill="#4a7ae0"/><path d="M5 11l1.500-2 1.500 1.500 1.500-2 1.500 2" stroke="#f07040" stroke-width="1.100" fill="none"/></svg>
<div class="tr" style="left:60px;top:309px">交叉引用</div>
<div class="dh" style="left:29px;top:333px;width:10px"></div>
<svg style="left:39px;top:326px" width="15" height="14" viewBox="0 0 15 14"><rect x="1.500" y=".5" width="12" height="8.500" fill="#33373a" stroke="#111"/><path d="M3 3h9M3 5.500h9" stroke="#5c6" stroke-width="1"/><path d="M7.500 9v3" stroke="#111" stroke-width="2"/><path d="M1 13h13" stroke="#111" stroke-width="1.600"/></svg>
<div class="tr" style="left:60px;top:325px">通信</div>
<div class="dh" style="left:33px;top:349px;width:6px"></div>
<div class="ex p" style="left:24px;top:345px"></div>
<svg style="left:39px;top:342px" width="16" height="14" viewBox="0 0 16 14"><path d="M.5 2.500h15v11h-15z" fill="#f0d060" stroke="#b18a2a"/><path d="M4 3l9 9" stroke="#222" stroke-width="2.200"/><path d="M2 1.500l1 1M5 .5v1.500M1 5h1.500" stroke="#222" stroke-width=".9"/></svg>
<div class="tr" style="left:60px;top:341px">向导</div>
<div class="dh" style="left:33px;top:365px;width:6px"></div>
<div class="ex p" style="left:24px;top:361px"></div>
<svg style="left:39px;top:358px" width="16" height="14" viewBox="0 0 16 14"><path d="M.5 1.500h6.500l1 1.500h7.500v10.500h-15.500z" fill="url(#fg1)" stroke="#b48a2c"/><path d="M1 4h14v9h-14z" fill="url(#fg2)"/><rect x="3.500" y="5" width="9.500" height="7.500" fill="#e8eefb" stroke="#7888b8" stroke-width=".7"/><rect x="3.500" y="5" width="9.500" height="1.800" fill="#88a4e4"/><path d="M5.500 10.500h5.500" stroke="#8894b8" stroke-width="1"/></svg>
<div class="tr" style="left:60px;top:357px">工具</div>
<div class="dh" style="left:14px;top:381px;width:6px"></div>
<div class="ex " style="left:5px;top:377px"></div>
<svg style="left:20px;top:374px" width="16" height="14" viewBox="0 0 16 14"><path d="M.5 1.500h6.500l1 1.500h7.500v10.500h-15.500z" fill="url(#fg1)" stroke="#b48a2c"/><path d="M1 4h14v9h-14z" fill="url(#fg2)"/><rect x="5.500" y="5.500" width="5" height="6" fill="none" stroke="#1a48d8" stroke-width="1.500"/><path d="M2.500 7.500h3M2.500 9.500h3M10.500 8.500h3" stroke="#1a48d8" stroke-width="1.300"/></svg>
<div class="tr" style="left:40px;top:373px">指令</div>
<div class="dh" style="left:29px;top:397px;width:10px"></div>
<svg style="left:39px;top:390px" width="16" height="14" viewBox="0 0 16 14"><path d="M.5 1.500h6.500l1 1.500h7.500v10.500h-15.500z" fill="url(#fg1)" stroke="#b48a2c"/><path d="M1 4h14v9h-14z" fill="url(#fg2)"/><rect x="4.500" y="4.500" width="7" height="7.500" fill="#dfe8ff" stroke="#6a8ae0" stroke-width=".6"/><path d="M8 5.500v5.500M5.300 8.200h5.400M6 6.200l4 4M10 6.200l-4 4" stroke="#1a48d8" stroke-width=".9"/><rect x="7" y="7.200" width="2" height="2" fill="#fff"/></svg>
<div class="tr" style="left:60px;top:389px">收藏夹</div>
<div class="dh" style="left:33px;top:413px;width:6px"></div>
<div class="ex p" style="left:24px;top:409px"></div>
<svg style="left:39px;top:406px" width="16" height="14" viewBox="0 0 16 14"><path d="M.5 1.500h6.500l1 1.500h7.500v10.500h-15.500z" fill="url(#fg1)" stroke="#b48a2c"/><path d="M1 4h14v9h-14z" fill="url(#fg2)"/><path d="M2.500 8.500h3.500M10 8.500h3.500M6 5.500v6M10 5.500v6" stroke="#1a48d8" stroke-width="1.500"/></svg>
<div class="tr" style="left:60px;top:405px">位逻辑</div>
<div class="dh" style="left:33px;top:429px;width:6px"></div>
<div class="ex p" style="left:24px;top:425px"></div>
<svg style="left:39px;top:422px" width="16" height="14" viewBox="0 0 16 14"><path d="M.5 1.500h6.500l1 1.500h7.500v10.500h-15.500z" fill="url(#fg1)" stroke="#b48a2c"/><path d="M1 4h14v9h-14z" fill="url(#fg2)"/><circle cx="8" cy="8.300" r="4.600" fill="#e8ecf8" stroke="#5a5a78" stroke-width=".9"/><circle cx="8" cy="8.300" r="3.300" fill="#fff" stroke="#9aa" stroke-width=".5" stroke-dasharray=".6 1.130"/><path d="M8 5.800v2.500h2" stroke="#223" stroke-width=".9" fill="none"/></svg>
<div class="tr" style="left:60px;top:421px">时钟</div>
<div class="dh" style="left:33px;top:445px;width:6px"></div>
<div class="ex p" style="left:24px;top:441px"></div>
<svg style="left:39px;top:438px" width="16" height="14" viewBox="0 0 16 14"><path d="M.5 1.500h6.500l1 1.500h7.500v10.500h-15.500z" fill="url(#fg1)" stroke="#b48a2c"/><path d="M1 4h14v9h-14z" fill="url(#fg2)"/><path d="M10.500 4l-5 5h3l-2 4 5.500-5.500h-3z" fill="#1a48d8"/></svg>
<div class="tr" style="left:60px;top:437px">通信</div>
<div class="dh" style="left:33px;top:461px;width:6px"></div>
<div class="ex p" style="left:24px;top:457px"></div>
<svg style="left:39px;top:454px" width="16" height="14" viewBox="0 0 16 14"><path d="M.5 1.500h6.500l1 1.500h7.500v10.500h-15.500z" fill="url(#fg1)" stroke="#b48a2c"/><path d="M1 4h14v9h-14z" fill="url(#fg2)"/><path d="M5 5l6.500 3.500-6.500 3.500" stroke="#1a48d8" stroke-width="1.800" fill="none"/></svg>
<div class="tr" style="left:60px;top:453px">比较</div>
<div class="dh" style="left:33px;top:477px;width:6px"></div>
<div class="ex p" style="left:24px;top:473px"></div>
<svg style="left:39px;top:470px" width="16" height="14" viewBox="0 0 16 14"><path d="M.5 1.500h6.500l1 1.500h7.500v10.500h-15.500z" fill="url(#fg1)" stroke="#b48a2c"/><path d="M1 4h14v9h-14z" fill="url(#fg2)"/><path d="M2.500 10.500l3.200-4 3.200 4zM8 7h5.500l-2.750 3.500z" fill="#1a48d8"/></svg>
<div class="tr" style="left:60px;top:469px">转换</div>
<div class="dh" style="left:33px;top:493px;width:6px"></div>
<div class="ex p" style="left:24px;top:489px"></div>
<svg style="left:39px;top:486px" width="16" height="14" viewBox="0 0 16 14"><path d="M.5 1.500h6.500l1 1.500h7.500v10.500h-15.500z" fill="url(#fg1)" stroke="#b48a2c"/><path d="M1 4h14v9h-14z" fill="url(#fg2)"/><text x="8" y="11.6" font-size="9.5" font-weight="bold" fill="#1a48d8" text-anchor="middle" font-family="Liberation Sans,sans-serif">+1</text></svg>
<div class="tr" style="left:60px;top:485px">计数器</div>
<div class="dh" style="left:33px;top:509px;width:6px"></div>
<div class="ex p" style="left:24px;top:505px"></div>
<svg style="left:39px;top:502px" width="16" height="14" viewBox="0 0 16 14"><path d="M.5 1.500h6.500l1 1.500h7.500v10.500h-15.500z" fill="url(#fg1)" stroke="#b48a2c"/><path d="M1 4h14v9h-14z" fill="url(#fg2)"/><text x="8" y="11.6" font-size="9" font-weight="bold" fill="#1a48d8" text-anchor="middle" font-family="Liberation Sans,sans-serif">±R</text></svg>
<div class="tr" style="left:60px;top:501px">浮点运算</div>
<div class="dh" style="left:33px;top:525px;width:6px"></div>
<div class="ex p" style="left:24px;top:521px"></div>
<svg style="left:39px;top:518px" width="16" height="14" viewBox="0 0 16 14"><path d="M.5 1.500h6.500l1 1.500h7.500v10.500h-15.500z" fill="url(#fg1)" stroke="#b48a2c"/><path d="M1 4h14v9h-14z" fill="url(#fg2)"/><text x="8" y="11.6" font-size="9.5" font-weight="bold" fill="#1a48d8" text-anchor="middle" font-family="Liberation Sans,sans-serif">±I</text></svg>
<div class="tr" style="left:60px;top:517px">整数运算</div>
<div class="dh" style="left:33px;top:541px;width:6px"></div>
<div class="ex p" style="left:24px;top:537px"></div>
<svg style="left:39px;top:534px" width="16" height="14" viewBox="0 0 16 14"><path d="M.5 1.500h6.500l1 1.500h7.500v10.500h-15.500z" fill="url(#fg1)" stroke="#b48a2c"/><path d="M1 4h14v9h-14z" fill="url(#fg2)"/><path d="M4.500 12v-5.500M8 12v-5.500M11.500 12v-5.500" stroke="#1a48d8" stroke-width="1.300"/><path d="M2.800 8.500l1.700-2.500 1.700 2.500zM6.300 8.500l1.700-2.500 1.700 2.500zM9.800 8.500l1.700-2.500 1.700 2.500z" fill="#1a48d8"/></svg>
<div class="tr" style="left:60px;top:533px">中断</div>
<div class="dh" style="left:33px;top:557px;width:6px"></div>
<div class="ex p" style="left:24px;top:553px"></div>
<svg style="left:39px;top:550px" width="16" height="14" viewBox="0 0 16 14"><path d="M.5 1.500h6.500l1 1.500h7.500v10.500h-15.500z" fill="url(#fg1)" stroke="#b48a2c"/><path d="M1 4h14v9h-14z" fill="url(#fg2)"/><path d="M3.500 6v5.500M12.500 6v5.500M10.500 6v5.500" stroke="#1a48d8" stroke-width="1.300"/><ellipse cx="7" cy="8.750" rx="1.500" ry="2.400" fill="none" stroke="#1a48d8" stroke-width="1.200"/></svg>
<div class="tr" style="left:60px;top:549px">逻辑运算</div>
<div class="dh" style="left:33px;top:573px;width:6px"></div>
<div class="ex p" style="left:24px;top:569px"></div>
<svg style="left:39px;top:566px" width="16" height="14" viewBox="0 0 16 14"><path d="M.5 1.500h6.500l1 1.500h7.500v10.500h-15.500z" fill="url(#fg1)" stroke="#b48a2c"/><path d="M1 4h14v9h-14z" fill="url(#fg2)"/><path d="M3.500 11c.5-4.500 6-5 8-2" stroke="#1a48d8" stroke-width="1.400" fill="none"/><path d="M12.800 10.800l-3.300-.6 2.600-2.600z" fill="#1a48d8"/></svg>
<div class="tr" style="left:60px;top:565px">传送</div>
<div class="dh" style="left:33px;top:589px;width:6px"></div>
<div class="ex p" style="left:24px;top:585px"></div>
<svg style="left:39px;top:582px" width="16" height="14" viewBox="0 0 16 14"><path d="M.5 1.500h6.500l1 1.500h7.500v10.500h-15.500z" fill="url(#fg1)" stroke="#b48a2c"/><path d="M1 4h14v9h-14z" fill="url(#fg2)"/><path d="M2.500 7.500h3.500v4M8 11.500v-4h3.500" stroke="#1a48d8" stroke-width="1.400" fill="none"/><path d="M10.800 5l2.700 2.500-2.700 2.500z" fill="#1a48d8"/><path d="M4.500 12l1.500-2 1.500 2z" fill="#1a48d8"/></svg>
<div class="tr" style="left:60px;top:581px">程序控制</div>
<div class="dh" style="left:33px;top:605px;width:6px"></div>
<div class="ex p" style="left:24px;top:601px"></div>
<svg style="left:39px;top:598px" width="16" height="14" viewBox="0 0 16 14"><path d="M.5 1.500h6.500l1 1.500h7.500v10.500h-15.500z" fill="url(#fg1)" stroke="#b48a2c"/><path d="M1 4h14v9h-14z" fill="url(#fg2)"/><path d="M4 5v4M6.700 5v4M9.300 5v4M12 5v4" stroke="#1a48d8" stroke-width="1.200"/><path d="M3 11.200h10" stroke="#1a48d8" stroke-width="1.200"/><path d="M2.500 11.200l2-1.600v3.200zM13.500 11.200l-2-1.600v3.200z" fill="#1a48d8"/></svg>
<div class="tr" style="left:60px;top:597px">移位/循环</div>
<div class="dh" style="left:33px;top:621px;width:6px"></div>
<div class="ex p" style="left:24px;top:617px"></div>
<svg style="left:39px;top:614px" width="16" height="14" viewBox="0 0 16 14"><path d="M.5 1.500h6.500l1 1.500h7.500v10.500h-15.500z" fill="url(#fg1)" stroke="#b48a2c"/><path d="M1 4h14v9h-14z" fill="url(#fg2)"/><text x="8" y="11.5" font-size="8.5" font-weight="bold" fill="#1a48d8" text-anchor="middle" font-family="Liberation Sans,sans-serif">AB</text><rect x="2.500" y="4.500" width="11" height="8.500" fill="none" stroke="#1a48d8" stroke-width=".8"/></svg>
<div class="tr" style="left:60px;top:613px">字符串</div>
<div class="dh" style="left:33px;top:637px;width:6px"></div>
<div class="ex p" style="left:24px;top:633px"></div>
<svg style="left:39px;top:630px" width="16" height="14" viewBox="0 0 16 14"><path d="M.5 1.500h6.500l1 1.500h7.500v10.500h-15.500z" fill="url(#fg1)" stroke="#b48a2c"/><path d="M1 4h14v9h-14z" fill="url(#fg2)"/><rect x="3.500" y="5.500" width="9.500" height="6" fill="#fff" stroke="#1a48d8" stroke-width="1.100"/><path d="M3.500 8.500h9.500M6.700 5.500v6M9.800 5.500v6" stroke="#1a48d8" stroke-width=".9"/></svg>
<div class="tr" style="left:60px;top:629px">表格</div>
<div class="dh" style="left:33px;top:653px;width:6px"></div>
<div class="ex p" style="left:24px;top:649px"></div>
<svg style="left:39px;top:646px" width="16" height="14" viewBox="0 0 16 14"><path d="M.5 1.500h6.500l1 1.500h7.500v10.500h-15.500z" fill="url(#fg1)" stroke="#b48a2c"/><path d="M1 4h14v9h-14z" fill="url(#fg2)"/><circle cx="8.300" cy="8.700" r="3.700" fill="#fff" stroke="#1a48d8" stroke-width="1.200"/><path d="M8.300 8.700l-2.300-2.300" stroke="#e02020" stroke-width="1.300"/><path d="M4 4.500l2 2" stroke="#e02020" stroke-width="1.200"/></svg>
<div class="tr" style="left:60px;top:645px">定时器</div>
<div class="dh" style="left:33px;top:669px;width:6px"></div>
<div class="ex p" style="left:24px;top:665px"></div>
<svg style="left:39px;top:662px" width="16" height="14" viewBox="0 0 16 14"><path d="M.5 1.500h6.500l1 1.500h7.500v10.500h-15.500z" fill="url(#fg1)" stroke="#b48a2c"/><path d="M1 4h14v9h-14z" fill="url(#fg2)"/><path d="M-1 8.500h5M4.500 5.500h8.500v6.500h-8.500zM7.500 7.500h3v2.500h-3z" stroke="#1a48d8" stroke-width="1.400" fill="none"/></svg>
<div class="tr" style="left:60px;top:661px"><span class="l">PROFINET</span></div>
<div class="dh" style="left:33px;top:685px;width:6px"></div>
<div class="ex p" style="left:24px;top:681px"></div>
<svg style="left:39px;top:678px" width="16" height="14" viewBox="0 0 16 14"><path d="M.5 1.500h6.500l1 1.500h7.500v10.500h-15.500z" fill="url(#fg1)" stroke="#b48a2c"/><path d="M1 4h14v9h-14z" fill="url(#fg2)"/><rect x="4.500" y="5" width="2.600" height="7.500" fill="#e05a4a"/><rect x="7.100" y="5" width="2.600" height="7.500" fill="#58a848"/><rect x="9.700" y="5" width="2.200" height="7.500" fill="#e8a838"/><path d="M4.500 5h7.400v7.500h-7.400z" fill="none" stroke="#8a6a30" stroke-width=".5"/></svg>
<div class="tr" style="left:60px;top:677px">库</div>
<div class="dh" style="left:33px;top:701px;width:6px"></div>
<div class="ex p" style="left:24px;top:697px"></div>
<svg style="left:39px;top:694px" width="16" height="14" viewBox="0 0 16 14"><path d="M.5 1.500h6.500l1 1.500h7.500v10.500h-15.500z" fill="url(#fg1)" stroke="#b48a2c"/><path d="M1 4h14v9h-14z" fill="url(#fg2)"/><path d="M4.500 4.500h5l2 2v6h-7z" fill="#dfe8fb" stroke="#7a8cc0" stroke-width=".7"/><path d="M5.500 8.500h1.500M7 7v3M9 7v3M9 8.500h1.500" stroke="#4a6cc8" stroke-width=".8"/></svg>
<div class="tr" style="left:60px;top:693px">调用子例程</div>
<div class="a" id="ed"></div><div class="a" id="edtb"></div><div class="a" id="edc"></div>
<div class="a" style="left:1918px;top:137px;width:2px;height:421px;background:#f6f6f6"></div>
<svg style="left:300px;top:138px" width="960" height="24" viewBox="0 0 960 24"><circle cx="15" cy="12" r="6.800" fill="#35a82c" stroke="#1d7a18"/><circle cx="15" cy="10" r="4.500" fill="#6fd25f" opacity=".6"/><path d="M12.800 8l6 4-6 4z" fill="#fff"/><circle cx="37" cy="12" r="6.800" fill="#e2401c" stroke="#a8280c"/><circle cx="37" cy="10" r="4.500" fill="#f58a60" opacity=".6"/><rect x="34" y="9" width="6" height="6" rx="1" fill="#fff"/><path d="M53.500 6.500h7l3 3v9h-10z" fill="#f4f7fc" stroke="#6c7fb0"/><path d="M57.500 10.500h7l2 2v7h-9z" fill="#f4f7fc" stroke="#6c7fb0"/><path d="M56 12l3.500 4 8-11" stroke="#2aa820" stroke-width="2" fill="none"/><path d="M91 5l7.500 7.500h-4v7h-7v-7h-4z" fill="#3d9df0" stroke="#1c68c0"/><path d="M157 20l7.500-7.500h-4v-7h-7v7h-4z" fill="#4cb83a" stroke="#2a8a1c"/><path d="M225.500 4.700v14.600M225.500 16.500h3M228.500 14.500v4M231.500 14.500v4M231.500 16.500h2.500M236.500 14.500c-1.400 1.200-1.400 2.800 0 4M239.500 14.500c1.400 1.200 1.400 2.800 0 4" stroke="#0a0a0a" fill="none"/><path d="M230 8.400l4.600-4.200v2.500h4.600v3.400h-4.600v2.500z" fill="#74c860" stroke="#48a038" stroke-width=".7"/><path d="M292.500 5.200v14.100M292.500 7.500h3M295.500 5.500v4M298.500 5.500v4M298.500 7.500h2.500M303.500 5.500c-1.400 1.200-1.400 2.800 0 4M306.500 5.500c1.400 1.200 1.400 2.800 0 4" stroke="#0a0a0a" fill="none"/><path d="M301.300 11.800l6.700 7M308 11.800l-6.700 7" stroke="#e81010" stroke-width="1.800"/><circle cx="301.800" cy="18.300" r="1.300" fill="#e81010"/><rect x="371" y="5" width="10" height="12" fill="#dce8fb"/><rect x="371" y="5" width="10" height="2" fill="#5a8ef0"/><rect x="366.0" y="5.2" width="5" height="3.700" fill="#fff" stroke="#2a64e0" stroke-width="1.300"/><rect x="369.5" y="9.4" width="5" height="3.700" fill="#fff" stroke="#2a64e0" stroke-width="1.300"/><rect x="374.3" y="13.5" width="5" height="3.700" fill="#fff" stroke="#2a64e0" stroke-width="1.300"/><path d="M365 12l4.200 3.700-4.200 3.700z" fill="#38b030" stroke="#2a9020" stroke-width=".5"/><rect x="393" y="5" width="10" height="12" fill="#bdbdbd"/><rect x="393" y="5" width="10" height="2" fill="#8a8a8a"/><rect x="388.0" y="5.2" width="5" height="3.700" fill="#a8a8a8" stroke="#757575" stroke-width="1.300"/><rect x="391.5" y="9.4" width="5" height="3.700" fill="#a8a8a8" stroke="#757575" stroke-width="1.300"/><rect x="396.3" y="13.5" width="5" height="3.700" fill="#a8a8a8" stroke="#757575" stroke-width="1.300"/><path d="M387.8 14v5.500M391.3 14v5.500" stroke="#6a6a6a" stroke-width="1.700"/><defs><linearGradient id="rb" x1="0" y1="0" x2="1" y2="1"><stop offset="0" stop-color="#fff"/><stop offset="1" stop-color="#bcd4f8"/></linearGradient><linearGradient id="ab" x1="0" y1="0" x2="0" y2="1"><stop offset="0" stop-color="#7aa8f4"/><stop offset=".5" stop-color="#2a5cc8"/><stop offset="1" stop-color="#5a8ce8"/></linearGradient><linearGradient id="gb" x1="0" y1="0" x2="0" y2="1"><stop offset="0" stop-color="#48b848"/><stop offset="1" stop-color="#188a20"/></linearGradient><linearGradient id="lk" x1="0" y1="0" x2="0" y2="1"><stop offset="0" stop-color="#8c8c8c"/><stop offset="1" stop-color="#6c6c6c"/></linearGradient><linearGradient id="lg" x1="0" y1="0" x2="0" y2="1"><stop offset="0" stop-color="#f8d050"/><stop offset="1" stop-color="#d8a020"/></linearGradient></defs><rect x="418.700" y="9.800" width="12.700" height="8.400" rx="3" fill="url(#rb)" stroke="#3a78e0" stroke-width="1.300"/><rect x="441.300" y="10" width="13.200" height="8.200" rx="3" fill="url(#rb)" stroke="#3a78e0" stroke-width="1.300"/><path d="M439 9.200l5.200-4.400v2.400h9.500v4h-9.500v2.400z" fill="url(#ab)" stroke="#2450b0" stroke-width=".5"/><rect x="461.500" y="10" width="13.200" height="8.200" rx="3" fill="url(#rb)" stroke="#3a78e0" stroke-width="1.300"/><path d="M477.200 9.200l-5.200-4.400v2.400h-6.500v4h6.500v2.400z" fill="url(#ab)" stroke="#2450b0" stroke-width=".5"/><rect x="486.500" y="10.300" width="12" height="8" rx="3" fill="url(#rb)" stroke="#3a78e0" stroke-width="1.200"/><rect x="483.500" y="7.600" width="12.500" height="8.200" rx="3" fill="url(#rb)" stroke="#3a78e0" stroke-width="1.200"/><path d="M485.500 4.300l7.300 7.700M492.800 4.300l-7.300 7.700" stroke="#e81010" stroke-width="1.800"/><circle cx="486" cy="11.500" r="1.200" fill="#e81010"/><rect x="514.300" y="5.300" width="13.600" height="13.500" rx="2" fill="url(#gb)" stroke="#158018" stroke-width=".8"/><path d="M517 12h8M521.500 8.300l3.700 3.700-3.700 3.700" stroke="#fff" stroke-width="1.700" fill="none"/><path d="M547.5 12v-2.200a2.900 2.900 0 0 1 5.800 0v2.200" stroke="#6a6a6a" stroke-width="2.400" fill="none"/><rect x="544.1" y="11.800" width="12.600" height="7.800" rx=".8" fill="url(#lk)" stroke="#5a5a5a" stroke-width=".6"/><path d="M550.4000000000001 14v4M548.7 15.800l1.700-1.900 1.700 1.900M549.1 18h2.600" stroke="#2a2a2a" stroke-width="1" fill="none"/><path d="M566 10.400v-.600a2.900 2.900 0 0 1 5.800 0v2.200" stroke="#6a6a6a" stroke-width="2.400" fill="none"/><rect x="568.4" y="11.800" width="12.600" height="7.800" rx=".8" fill="url(#lk)" stroke="#5a5a5a" stroke-width=".6"/><path d="M574.7 14v4M573 15.800l1.700-1.900 1.700 1.900M573.4 18h2.600" stroke="#2a2a2a" stroke-width="1" fill="none"/><path d="M588.4 10.400v-.600a2.900 2.900 0 0 1 5.800 0v2.200" stroke="#b89038" stroke-width="2.400" fill="none"/><rect x="590.8" y="11.800" width="12.600" height="7.800" rx=".8" fill="url(#lg)" stroke="#a87c18" stroke-width=".6"/><path d="M597.1 14v4M595.4 15.800l1.700-1.900 1.700 1.900M595.8 18h2.600" stroke="#2a2a2a" stroke-width="1" fill="none"/><path d="M599.600 4.300v5M597.100 6.800h5" stroke="#2f6fe0" stroke-width="1.200"/><path d="M617 6.500h11M620.500 6.500v11h8" stroke="#2f6fe0" stroke-width="1.500" fill="none"/><path d="M627 3l4.500 3.500-4.500 3.500zM627 14l4.500 3.500-4.500 3.500z" fill="#2f6fe0"/><path d="M639 11.500h15M647.500 11.500v6" stroke="#2f6fe0" stroke-width="1.500" fill="none"/><path d="M644 16.500h7l-3.500 4.500z" fill="#2f6fe0"/><path d="M661 12.500h15M668.500 12.500v-6" stroke="#2f6fe0" stroke-width="1.500" fill="none"/><path d="M665 8h7l-3.500-4.500z" fill="#2f6fe0"/><path d="M683 11.500h12" stroke="#2f6fe0" stroke-width="1.500" fill="none"/><path d="M693 8l5 3.500-5 3.500z" fill="#2f6fe0"/><path d="M713 11.500h5M723 11.500h5M718.500 6v11M722.500 6v11" stroke="#2f6fe0" stroke-width="1.400" fill="none"/><path d="M735 11.500h4M747 11.500h4M741.500 6.500c-3 3-3 7 0 10M745 6.500c3 3 3 7 0 10" stroke="#2f6fe0" stroke-width="1.400" fill="none"/><path d="M757 11.500h6M763.500 5.500h8v12h-8z" stroke="#2f6fe0" stroke-width="1.400" fill="none"/><path d="M792.500 8.500h9a2.500 2.500 0 0 1 2.500 2.500v2a2.500 2.500 0 0 1-2.500 2.500h-9l-3-3.500z" fill="#e4ecfb" stroke="#2a58c0" stroke-width="1.300"/><circle cx="792.500" cy="12" r="1" fill="#2a58c0"/><path d="M811 11h5l-2.500 3z" fill="#555"/><path d="M823 5.500h4M828.500 3v5M831.500 3v5M832 5.500h2M835.500 3.500c1.500 1 1.500 2.500 0 4" stroke="#111" fill="none"/><rect x="822.500" y="10.500" width="15" height="8" fill="#fff" stroke="#2f6fe0"/><path d="M822.500 14.500h15M827.500 10.500v8M832.500 10.500v8" stroke="#2f6fe0"/><rect x="823" y="11" width="14" height="2" fill="#2f6fe0" opacity=".6"/><path d="M845.500 6.500h10v13h-10z" fill="#f6f8fc" stroke="#6c7fb0"/><path d="M847 10h2M850.500 10h4M847 12.500h2M850.500 12.500h4M847 15h2M850.500 15h4" stroke="#4a6cc0" stroke-width=".9"/><path d="M852 13l7-9 2 1.500-7 9-2.500 1z" fill="#e8a040" stroke="#8a5a20" stroke-width=".6"/><path d="M858.800 4.200l2 1.500" stroke="#d33" stroke-width="1.600"/><path d="M866.500 4v17M867 17.500h3M871.500 15v5M874.500 15v5M875 17.500h2M878.500 15.500c1.500 1 1.500 3 0 4" stroke="#111" fill="none"/><path d="M869 6h8M869 8.500h8M869 11h6" stroke="#888" stroke-width=".8"/><path d="M873 13l7-9 2 1.500-7 9-2.500 1z" fill="#e8a040" stroke="#8a5a20" stroke-width=".6"/><path d="M879.800 4.200l2 1.500" stroke="#d33" stroke-width="1.600"/><path d="M898.500 10.500h8v9h-8z" fill="#f6f8fc" stroke="#6c7fb0"/><circle cx="907" cy="7.500" r="3.800" fill="#f4c030" stroke="#a8821c"/><circle cx="908" cy="6.500" r="1.200" fill="#fff"/><path d="M904.500 10l-6.500 7 1.500 1.500 1.500-1.500 1 1 1.500-1.500-1-1 3.500-4z" fill="#f4c030" stroke="#a8821c" stroke-width=".7"/><path d="M920.500 8.500h10v11h-10z" fill="#f6f8fc" stroke="#6c7fb0"/><path d="M922 12h7M922 14.500h7M922 17h7" stroke="#8894b0" stroke-width=".8"/><path d="M923 6l5-3 6 2-3 4-4-1.500z" fill="#e8b830" stroke="#a8821c" stroke-width=".7"/><path d="M933 3v5" stroke="#2a9a3a" stroke-width="1.500"/></svg>
<div class="sep" style="left:373px"></div>
<div class="sep" style="left:515px"></div>
<div class="sep" style="left:657px"></div>
<div class="sep" style="left:709px"></div>
<div class="sep" style="left:805px"></div>
<div class="sep" style="left:835px"></div>
<div class="sep" style="left:909px"></div>
<div class="sep" style="left:1005px"></div>
<div class="sep" style="left:1079px"></div>
<div class="sep" style="left:1188px"></div>
<div class="tbt" style="left:403px">上传</div>
<div class="tbt" style="left:470px">下载</div>
<div class="tbt" style="left:545px">插入</div>
<div class="tbt" style="left:612px">删除</div>
<div class="dd" style="left:436px"></div>
<div class="dd" style="left:503px"></div>
<div class="dd" style="left:578px"></div>
<div class="dd" style="left:646px"></div>
<svg style="left:306px;top:167px" width="9" height="11" viewBox="0 0 9 11"><path d="M7.500 1v9l-6-4.500z" fill="none" stroke="#444"/></svg>
<svg style="left:1899px;top:167px" width="9" height="11" viewBox="0 0 9 11"><path d="M1.500 1v9l6-4.500z" fill="none" stroke="#444"/></svg>
<div class="tab" style="left:420px;width:109px;background:linear-gradient(#fdfdfd,#e4e6ea 55%,#c9ccd6)"></div>
<div class="tab" style="left:529px;width:110px;background:linear-gradient(#fff6a8,#ffe07a 55%,#f2c860)"></div>
<div class="tab" style="left:639px;width:83px;background:linear-gradient(#f0dcfa,#dcc0f0 55%,#c4a6e0)"></div>
<svg style="left:318px;top:164px" width="104" height="20" viewBox="0 0 104 20"><defs><linearGradient id="tg" x1="0" y1="0" x2="0" y2="1"><stop offset="0" stop-color="#fff"/><stop offset=".5" stop-color="#eef2fb"/><stop offset="1" stop-color="#c8d6f4"/></linearGradient></defs><path d="M0 19.500L17 2.500Q19 .5 22 .5H99Q101.500 .5 101.500 3V19.500z" fill="url(#tg)" stroke="#8d929c"/></svg>
<div class="tabt" style="left:352px;font-weight:bold;font-size:14px">主循环</div>
<svg style="left:405.500px;top:170.500px" width="9" height="8" viewBox="0 0 9 8"><path d="M1 .5l7 7M8 .5l-7 7" stroke="#333" stroke-width="1.200"/></svg>
<div class="tabt" style="left:438px">上模自动流程</div>
<div class="tabt" style="left:548px">轨道自动流程</div>
<div class="tabt" style="left:657px">改造报警</div>
<div class="a" style="left:305px;top:184px;width:23px;height:353px;background-color:#e9e9e9;background-image:repeating-conic-gradient(#d4d4d4 0 25%,#fbfbfb 0 50%);background-size:2px 2px"></div>
<div class="lad" style="left:331px;top:189px;width:2px;height:13px"></div>
<div class="ct" style="left:338px;top:190px;color:#008000">程序注释</div>
<div class="a" style="left:305px;top:206px;width:310px;height:2px;background:linear-gradient(90deg,#a2a2a2 0,#a8a8a8 45%,rgba(255,255,255,0) 100%)"></div><div class="ct" style="left:304.500px;top:211px;width:22px;text-align:center;font-weight:bold;font-size:12px">1</div><div class="ct" style="left:338px;top:212px;color:#008000">程序段注释</div><div class="lad" style="left:331px;top:211px;width:2px;height:143px"></div><div class="lt" style="left:339px;top:236px">Always_On:SM0.0</div><div class="lad" style="left:333px;top:260px;width:34px;height:2px"></div><div class="lad" style="left:366px;top:251px;width:2px;height:19px"></div><div class="lad" style="left:397px;top:251px;width:2px;height:19px"></div><div class="lad" style="left:399px;top:260px;width:139px;height:2px"></div><div class="a" style="left:537px;top:234px;width:93px;height:52px;border:2px solid #000;background:#fff"></div><div class="lt" style="left:539px;top:236px;width:89px;text-align:center">IO</div><div class="lt" style="left:541px;top:254px">EN</div><div class="st" style="left:338px;top:312px;width:1311px;height:32px"></div><div class="sth" style="left:339px;top:313px;width:1309px"></div><div class="a" style="left:548px;top:313px;width:1px;height:30px;background:#6e6e6e"></div><div class="ct" style="left:342px;top:314.5px">符号</div><div class="ct" style="left:553px;top:314.5px">地址</div><div class="lt" style="left:342px;top:330px">Always_On</div><div class="lt" style="left:553px;top:330px">SM0.0</div>
<div class="a" style="left:333px;top:234px;width:100px;height:52px;border:1px dotted #444"></div>
<div class="a" style="left:305px;top:359px;width:310px;height:2px;background:linear-gradient(90deg,#a2a2a2 0,#a8a8a8 45%,rgba(255,255,255,0) 100%)"></div><div class="ct" style="left:304.500px;top:364px;width:22px;text-align:center;font-weight:bold;font-size:12px">2</div><div class="ct" style="left:338px;top:365px;color:#808080">输入注释</div><div class="lad" style="left:331px;top:364px;width:2px;height:143px"></div><div class="lt" style="left:339px;top:389px">Always_On:SM0.0</div><div class="lad" style="left:333px;top:413px;width:34px;height:2px"></div><div class="lad" style="left:366px;top:404px;width:2px;height:19px"></div><div class="lad" style="left:397px;top:404px;width:2px;height:19px"></div><div class="lad" style="left:399px;top:413px;width:139px;height:2px"></div><div class="a" style="left:537px;top:387px;width:93px;height:52px;border:2px solid #000;background:#fff"></div><div class="lt" style="left:539px;top:389px;width:57px;text-align:right">Main</div><div class="lt" style="left:541px;top:407px">EN</div><div class="st" style="left:338px;top:465px;width:1311px;height:32px"></div><div class="sth" style="left:339px;top:466px;width:1309px"></div><div class="a" style="left:548px;top:466px;width:1px;height:30px;background:#6e6e6e"></div><div class="ct" style="left:342px;top:467.5px">符号</div><div class="ct" style="left:553px;top:467.5px">地址</div><div class="lt" style="left:342px;top:483px">Always_On</div><div class="lt" style="left:553px;top:483px">SM0.0</div>
<div class="a" style="left:305px;top:512px;width:310px;height:2px;background:linear-gradient(90deg,#a2a2a2 0,#a8a8a8 45%,rgba(255,255,255,0) 100%)"></div><div class="ct" style="left:304.500px;top:517px;width:22px;text-align:center;font-weight:bold;font-size:12px">3</div><div class="ct" style="left:338px;top:518px;color:#808080">输入注释</div><div class="lad" style="left:331px;top:517px;width:2px;height:17px"></div>
<div class="vs" style="left:1899px;top:184px;width:16px;height:353px"></div>
<div class="th" style="left:1899px;top:201px;width:15px;height:29px"></div>
<svg style="left:1902px;top:189px" width="9" height="9" viewBox="0 0 9 9"><path d="M1 6l3.500-3.500 3.500 3.500" stroke="#505050" stroke-width="1.8" fill="none"/></svg>
<svg style="left:1902px;top:524px" width="9" height="9" viewBox="0 0 9 9"><path d="M1 2.500l3.500 3.500 3.500-3.500" stroke="#505050" stroke-width="1.8" fill="none"/></svg>
<div class="vs" style="left:304px;top:537px;width:1611px;height:16px"></div>
<div class="th" style="left:322px;top:538px;width:900px;height:14px;background:#cdcdcd"></div>
<svg style="left:309px;top:540px" width="9" height="9" viewBox="0 0 9 9"><path d="M6 1l-3.500 3.500 3.500 3.500" stroke="#505050" stroke-width="1.8" fill="none"/></svg>
<svg style="left:1886px;top:540px" width="9" height="9" viewBox="0 0 9 9"><path d="M2.500 1l3.500 3.500-3.500 3.500" stroke="#505050" stroke-width="1.8" fill="none"/></svg>
<div class="a" style="left:300px;top:562px;width:1620px;height:300px;background:#fff;border:1px solid #9a9a9a"></div><div class="a" style="left:301px;top:606px;width:1618px;height:236px;border:2px solid #c9d7f5;border-bottom:0"></div>
<div class="ph" style="left:301px;top:563px;width:1618px">输出窗口</div>
<svg style="left:1888px;top:566px" width="28" height="11" viewBox="0 0 28 11"><path d="M3.500 1.500h4v5h-4zM6.500 1.500v5M2 6.500h7M5.500 6.500v4" stroke="#333" fill="none"/><path d="M17.500 1.500l8 8M25.500 1.500l-8 8" stroke="#333" stroke-width="1.200" fill="none"/></svg>
<div class="tb" style="left:301px;top:582px;width:1618px;height:24px"></div>
<svg style="left:303px;top:585px" width="44" height="20" viewBox="0 0 44 20"><path d="M2 3h12M3 5.500h11M4 8h8M5 10.500h6" stroke="#7a8090" stroke-width="1.100"/><path d="M11 7l8 8M19 7l-8 8" stroke="#f03818" stroke-width="2"/><path d="M28.500 2.500h7l3 3v9h-10z" fill="#b8bcc4" stroke="#70757f"/><path d="M30.500 6h5M30.500 8h5" stroke="#70757f" stroke-width=".8"/><path d="M31 12l3-3.500 3 3.500h-1.800v5h-2.400v-5z" fill="#60656f"/></svg>
<div class="ol" style="top:610px"><span style="letter-spacing:0">初始化</span><i> (SBR34)</i></div>
<div class="ol" style="top:623px">改造报警<i> (SBR35)</i></div>
<div class="ol" style="top:636px">运行处理<i> (SBR36)</i></div>
<div class="ol" style="top:649px">压力交互处理<i> (SBR37)</i></div>
<div class="ol" style="top:662px">产量<i>2222222222222222 (SBR38)</i></div>
<div class="ol" style="top:675px"><i>ABS_I (SBR45)</i></div>
<div class="ol" style="top:688px"><i>StackRecord (SBR111)</i></div>
<div class="ol" style="top:701px"><i>INT_0 (INT0)</i></div>
<div class="ol" style="top:714px">块大小<i> = 29049</i>（字节），<i style="letter-spacing:.5px">0 </i>个错误</div>
<div class="ol" style="top:740px">正在编译数据页<i>...</i></div>
<div class="ol" style="top:753px">块大小<i> = 5186</i>（字节），<i style="letter-spacing:.5px">0 </i>个错误</div>
<div class="ol" style="top:779px">正在编译系统块<i>...</i></div>
<div class="ol" style="top:792px">已编译的块，<i style="letter-spacing:2px">0</i>个错误，<i style="letter-spacing:2px">0</i>个警告</div>
<div class="a" style="left:303px;top:817px;width:1597px;height:13px;background:#0078d7"></div>
<div class="ol" style="top:817px;color:#fff">错误总计：<i>0</i></div>
<div class="vs" style="left:1900px;top:608px;width:16px;height:233px"></div>
<div class="th" style="left:1901px;top:760px;width:15px;height:64px"></div>
<svg style="left:1904px;top:614px" width="9" height="9" viewBox="0 0 9 9"><path d="M1 6l3.500-3.500 3.500 3.500" stroke="#505050" stroke-width="1.8" fill="none"/></svg>
<svg style="left:1904px;top:829px" width="9" height="9" viewBox="0 0 9 9"><path d="M1 2.500l3.500 3.500 3.500-3.500" stroke="#505050" stroke-width="1.8" fill="none"/></svg>
<div class="a" style="left:301px;top:841px;width:1618px;height:20px;background:#ececec;border-top:1px solid #7a7a7a"></div>
<svg style="left:304px;top:845px" width="60" height="12" viewBox="0 0 60 12"><g fill="#444"><path d="M2 2h1.500v8h-1.500zM8.500 2v8l-4.500-4z"/><path d="M23.500 2v8l-4.500-4z"/><path d="M36 2v8l4.500-4z"/><path d="M51.500 2v8l4.500-4zM56.500 2h1.500v8h-1.500z"/></g></svg>
<svg style="left:366px;top:841px" width="54" height="19" viewBox="0 0 54 19"><path d="M0 .5h3l6 16.500h33l8-16.500h3" fill="none" stroke="#555"/><path d="M3 0l6 17h33l8-17z" fill="#fff"/></svg>
<div class="t" style="left:375px;top:842px;font-weight:bold;font-size:14px">组建</div>
<div class="a" style="left:300px;top:866px;width:1620px;height:148px;background:#fff;border:1px solid #9a9a9a"></div>
<div class="ph" style="left:301px;top:867px;width:1618px">变量表</div>
<svg style="left:1888px;top:870px" width="28" height="11" viewBox="0 0 28 11"><path d="M3.500 1.500h4v5h-4zM6.500 1.500v5M2 6.500h7M5.500 6.500v4" stroke="#333" fill="none"/><path d="M17.500 1.500l8 8M25.500 1.500l-8 8" stroke="#333" stroke-width="1.200" fill="none"/></svg>
<div class="tb" style="left:301px;top:886px;width:1618px;height:25px"></div>
<svg style="left:304px;top:889px" width="72" height="20" viewBox="0 0 72 20"><g fill="#fff" stroke="#7a86a0" stroke-width=".6"><rect x="1.500" y="1.500" width="8" height="2"/><rect x="1.500" y="14" width="8" height="2"/><rect x="23.500" y="1.500" width="8" height="2"/><rect x="23.500" y="14" width="8" height="2"/></g><path d="M9 3.500v2.500M9 14v-2.500M31 3.500v2.500M31 14v-2.500" stroke="#e8ecf4" stroke-width="1.200"/><path d="M8 9l5-4v2.500h4.500v3h-4.500v2.500z" fill="#6cc458" stroke="#3a9a2c" stroke-width=".7"/><path d="M31.500 5.500l7 7M38.500 5.500l-7 7" stroke="#e81818" stroke-width="1.700"/><path d="M46.500 2v14" stroke="#4a4a4a"/><path d="M47.500 2v14" stroke="#eceef2"/><path d="M54.500 12l3-3.500h6.500a2.500 2.500 0 0 1 2.500 2.500v2a2.500 2.500 0 0 1-2.500 2.500h-6.500z" fill="#dfe9fb" stroke="#2f5fd0" stroke-width="1.200"/><circle cx="58" cy="12" r=".9" fill="#2f5fd0"/><path d="M61.500 9l-3.500-3.500h2v-3.500h3v3.500h2z" fill="#58c048" stroke="#2a8a1c" stroke-width=".6"/></svg>
<div class="vh" style="left:301px;width:30px"></div>
<div class="vh" style="left:331px;width:60px">地址</div>
<div class="vh" style="left:391px;width:120px">符号</div>
<div class="vh" style="left:511px;width:100px">变量类型</div>
<div class="vh" style="left:611px;width:100px">数据类型</div>
<div class="vh" style="left:711px;width:250px">注释</div>
<div class="vc vn" style="left:301px;top:930px;width:30px">1</div>
<div class="vc vg" style="left:331px;top:930px;width:60px"></div>
<div class="vc" style="left:391px;top:930px;width:120px"></div>
<div class="vc vg" style="left:511px;top:930px;width:100px">TEMP</div>
<div class="vc" style="left:611px;top:930px;width:100px"></div>
<div class="vc" style="left:711px;top:930px;width:250px"></div>
<div class="vc vn" style="left:301px;top:949px;width:30px">2</div>
<div class="vc vg" style="left:331px;top:949px;width:60px"></div>
<div class="vc" style="left:391px;top:949px;width:120px"></div>
<div class="vc vg" style="left:511px;top:949px;width:100px">TEMP</div>
<div class="vc" style="left:611px;top:949px;width:100px"></div>
<div class="vc" style="left:711px;top:949px;width:250px"></div>
<div class="vc vn" style="left:301px;top:968px;width:30px">3</div>
<div class="vc vg" style="left:331px;top:968px;width:60px"></div>
<div class="vc" style="left:391px;top:968px;width:120px"></div>
<div class="vc vg" style="left:511px;top:968px;width:100px">TEMP</div>
<div class="vc" style="left:611px;top:968px;width:100px"></div>
<div class="vc" style="left:711px;top:968px;width:250px"></div>
<div class="vc vn" style="left:301px;top:987px;width:30px">4</div>
<div class="vc vg" style="left:331px;top:987px;width:60px"></div>
<div class="vc" style="left:391px;top:987px;width:120px"></div>
<div class="vc vg" style="left:511px;top:987px;width:100px">TEMP</div>
<div class="vc" style="left:611px;top:987px;width:100px"></div>
<div class="vc" style="left:711px;top:987px;width:250px"></div>
<div class="a" style="left:0;top:1014px;width:1920px;height:7px;background:#3e414b"></div>
<div class="a" style="left:231px;top:1015px;width:1px;height:6px;background:#5a5d66"></div><div class="a" style="left:270px;top:1015px;width:1px;height:6px;background:#5a5d66"></div><div class="a" style="left:523px;top:1015px;width:1px;height:6px;background:#5a5d66"></div><div class="a" style="left:572px;top:1015px;width:1px;height:6px;background:#5a5d66"></div>
<div class="a" style="left:1210px;top:1014px;width:206px;height:7px;background:#fff"></div>
<svg style="left:1208px;top:1009px" width="210" height="12" viewBox="0 0 210 12"><path d="M3 7l20-4.500 4 9.500h-22z" fill="#f05a28"/><path d="M8 12c1-3 6-4.500 12-4" stroke="#fff" stroke-width="1.600" fill="none"/><path d="M43.500 9.500v2.500" stroke="#1a78d8" stroke-width="1.400"/><path d="M82 12a5 5 0 0 1 10 0" stroke="#1a78d8" stroke-width="1.400" fill="none"/><circle cx="109" cy="11.500" r="1.600" fill="#1a78d8"/><path d="M123 11.500h14" stroke="#1a78d8" stroke-width="1.400"/><circle cx="152" cy="11.800" r="1.500" fill="#b8c0cc"/><path d="M170 12l2-2M176 12l-2-2M190 11.500h4M196 11.500h4" stroke="#1a78d8" stroke-width="1.300"/></svg>
<div class="a" style="left:1732px;top:1014px;width:188px;height:7px;background:linear-gradient(#cfcfcf,#bdbdbd);border-left:1px solid #1a1a1a;border-top:1px solid #1a1a1a"></div>
<svg style="left:1732px;top:1014px" width="188" height="7" viewBox="0 0 188 7"><circle cx="62" cy="10" r="6" fill="#fff" stroke="#555" stroke-width=".8"/><circle cx="178" cy="10" r="6" fill="#fff" stroke="#555" stroke-width=".8"/><rect x="116" y="5" width="8" height="4" fill="#fff" stroke="#333" stroke-width=".8"/></svg>
<div class="a" id="dlg"></div><div class="a" id="dlgt"></div>
<div class="dt" style="left:608px;top:280px">运动控制向导</div>
<svg style="left:1299px;top:281px" width="12" height="12" viewBox="0 0 12 12"><path d="M1 1l10 10M11 1l-10 10" stroke="#000" stroke-width="1.100"/></svg>
<div class="sunk" style="left:600px;top:306px;width:180px;height:450px;border-bottom:0"></div>
<div class="vs" style="left:761px;top:308px;width:17px;height:448px"></div>
<div class="th" style="left:761px;top:325px;width:15px;height:339px"></div>
<svg style="left:764px;top:314px" width="9" height="9" viewBox="0 0 9 9"><path d="M1 6l3.500-3.500 3.500 3.500" stroke="#505050" stroke-width="1.8" fill="none"/></svg>
<svg style="left:764px;top:744px" width="9" height="9" viewBox="0 0 9 9"><path d="M1 2.500l3.500 3.500 3.500-3.500" stroke="#505050" stroke-width="1.8" fill="none"/></svg>
<div class="a" style="left:0;top:0;width:1920px;height:756px;overflow:hidden">
<div class="dv" style="left:611px;top:326px;height:248px"></div>
<div class="dv" style="left:630px;top:342px;height:216px"></div>
<div class="dv" style="left:630px;top:582px;height:172px"></div>
<div class="cb k" style="left:605px;top:311px"></div>
<div class="dt" style="left:623.5px;top:310px">轴</div>
<div class="ex" style="left:607px;top:329px"></div><div class="dh" style="left:617px;top:333px;width:7px"></div>
<div class="cb k" style="left:624px;top:327px"></div>
<div class="dt" style="left:642px;top:326px">轴 <i>0</i></div>
<div class="dh" style="left:631px;top:349px;width:11px"></div>
<div class="cb k" style="left:643px;top:343px"></div>
<div class="dt" style="left:661px;top:342px">测量系统</div>
<div class="dh" style="left:631px;top:365px;width:11px"></div>
<div class="cb k" style="left:643px;top:359px"></div>
<div class="dt" style="left:661px;top:358px">方向控制</div>
<div class="ex p" style="left:626px;top:377px"></div><div class="dh" style="left:636px;top:381px;width:6px"></div>
<div class="cb k" style="left:643px;top:375px"></div>
<div class="dt" style="left:661px;top:374px">输入</div>
<div class="ex p" style="left:626px;top:393px"></div><div class="dh" style="left:636px;top:397px;width:6px"></div>
<div class="cb " style="left:643px;top:391px"></div>
<div class="dt" style="left:661px;top:390px">输出</div>
<div class="dh" style="left:631px;top:413px;width:11px"></div>
<div class="cb k" style="left:643px;top:407px"></div>
<div class="a" style="left:659px;top:406px;width:53px;height:16px;background:#0078d7"></div>
<div class="dt" style="left:661px;top:406px;color:#fff">电机速度</div>
<div class="dh" style="left:631px;top:429px;width:11px"></div>
<div class="cb k" style="left:643px;top:423px"></div>
<div class="dt" style="left:661px;top:422px"><u>JOG</u></div>
<div class="dh" style="left:631px;top:445px;width:11px"></div>
<div class="cb k" style="left:643px;top:439px"></div>
<div class="dt" style="left:661px;top:438px">电机时间</div>
<div class="dh" style="left:631px;top:461px;width:11px"></div>
<div class="cb " style="left:643px;top:455px"></div>
<div class="dt" style="left:661px;top:454px">急停时间</div>
<div class="dh" style="left:631px;top:477px;width:11px"></div>
<div class="cb " style="left:643px;top:471px"></div>
<div class="dt" style="left:661px;top:470px">反冲补偿</div>
<div class="ex p" style="left:626px;top:489px"></div><div class="dh" style="left:636px;top:493px;width:6px"></div>
<div class="cb k" style="left:643px;top:487px"></div>
<div class="dt" style="left:661px;top:486px">参考点</div>
<div class="dh" style="left:631px;top:509px;width:11px"></div>
<div class="cb " style="left:643px;top:503px"></div>
<div class="dt" style="left:661px;top:502px">读取位置</div>
<div class="dh" style="left:631px;top:525px;width:11px"></div>
<div class="cb " style="left:643px;top:519px"></div>
<div class="dt" style="left:661px;top:518px">曲线</div>
<div class="dh" style="left:631px;top:541px;width:11px"></div>
<div class="cb k" style="left:643px;top:535px"></div>
<div class="dt" style="left:661px;top:534px">存储器分配</div>
<div class="dh" style="left:631px;top:557px;width:11px"></div>
<div class="cb k" style="left:643px;top:551px"></div>
<div class="dt" style="left:661px;top:550px">组件</div>
<div class="ex" style="left:607px;top:569px"></div><div class="dh" style="left:617px;top:573px;width:7px"></div>
<div class="cb k" style="left:624px;top:567px"></div>
<div class="dt" style="left:642px;top:566px">轴 <i>1</i></div>
<div class="dh" style="left:631px;top:589px;width:11px"></div>
<div class="cb k" style="left:643px;top:583px"></div>
<div class="dt" style="left:661px;top:582px">测量系统</div>
<div class="dh" style="left:631px;top:605px;width:11px"></div>
<div class="cb " style="left:643px;top:599px"></div>
<div class="dt" style="left:661px;top:598px">方向控制</div>
<div class="ex p" style="left:626px;top:617px"></div><div class="dh" style="left:636px;top:621px;width:6px"></div>
<div class="cb k" style="left:643px;top:615px"></div>
<div class="dt" style="left:661px;top:614px">输入</div>
<div class="ex p" style="left:626px;top:633px"></div><div class="dh" style="left:636px;top:637px;width:6px"></div>
<div class="cb " style="left:643px;top:631px"></div>
<div class="dt" style="left:661px;top:630px">输出</div>
<div class="dh" style="left:631px;top:653px;width:11px"></div>
<div class="cb k" style="left:643px;top:647px"></div>
<div class="dt" style="left:661px;top:646px">电机速度</div>
<div class="dh" style="left:631px;top:669px;width:11px"></div>
<div class="cb k" style="left:643px;top:663px"></div>
<div class="dt" style="left:661px;top:662px"><u>JOG</u></div>
<div class="dh" style="left:631px;top:685px;width:11px"></div>
<div class="cb k" style="left:643px;top:679px"></div>
<div class="dt" style="left:661px;top:678px">电机时间</div>
<div class="dh" style="left:631px;top:701px;width:11px"></div>
<div class="cb " style="left:643px;top:695px"></div>
<div class="dt" style="left:661px;top:694px">急停时间</div>
<div class="dh" style="left:631px;top:717px;width:11px"></div>
<div class="cb " style="left:643px;top:711px"></div>
<div class="dt" style="left:661px;top:710px">反冲补偿</div>
<div class="ex p" style="left:626px;top:729px"></div><div class="dh" style="left:636px;top:733px;width:6px"></div>
<div class="cb k" style="left:643px;top:727px"></div>
<div class="dt" style="left:661px;top:726px">参考点</div>
<div class="dh" style="left:631px;top:749px;width:11px"></div>
<div class="cb " style="left:643px;top:743px"></div>
<div class="dt" style="left:661px;top:742px">读取位置</div>
</div>
<div class="a" style="left:599px;top:756px;width:200px;height:1px;background:#6a6a6a"></div><div class="a" style="left:590px;top:756px;width:200px;height:6px;background:linear-gradient(rgba(255,255,255,.0),rgba(255,255,255,0))"></div>
<div class="dt" style="left:790px;top:305px">本图显示了可组态的不同电机速度<i>.</i></div>
<div class="sunk" style="left:790px;top:323px;width:261px;height:109px"></div>
<svg style="left:790px;top:323px" width="261" height="109" viewBox="0 0 261 109" font-family="Liberation Sans,sans-serif" font-size="11" letter-spacing="-.38"><text x="30" y="14">MAX_SPEED</text><text x="8" y="52.500">SS_SPEED</text><text x="105" y="65.500">MIN_SPEED</text><path d="M12 79.500h238" stroke="#0000ff" stroke-dasharray="3 2" fill="none"/><path d="M12 88.500h237" stroke="#000" stroke-width="1.200" fill="none"/><path d="M57.500 88v-17.500l22.500-45.500h120l23.500 46.500v16.500" stroke="#0000ff" fill="none"/><path d="M55 75.500l2.500-5 2.500 5M221 83l2.500 5 2.500-5M195 22.500l5 2.500-5 2.500" stroke="#0000ff" stroke-width="1.200" fill="none"/><path d="M69.500 17l7 7M77 24.500v-4M77 24.500h-4M47.500 62l7 7M55 69.500v-4M55 69.500h-4M142.500 69l7 7M150 76.500v-4M150 76.500h-4" stroke="#000" stroke-width="1.200" fill="none"/></svg>
<div class="dt db" style="left:790px;top:447px;font-size:13px">最大值</div>
<div class="dt" style="left:817px;top:468px">应用的最大电机速度 <u>(MAX_SPEED)</u> 为<b>?</b></div>
<div class="sunk" style="left:817px;top:486px;width:83px;height:18px"></div><div class="dt" style="left:821px;top:487px;font-size:11px">100000</div><div class="a" style="left:882px;top:488px;width:16px;height:7px;background:#f0f0f0;border:1px solid;border-color:#fff #6a6a6a #6a6a6a #fff"></div><div class="a" style="left:882px;top:495px;width:16px;height:7px;background:#f0f0f0;border:1px solid;border-color:#fff #6a6a6a #6a6a6a #fff"></div><svg style="left:888px;top:490px" width="5" height="10" viewBox="0 0 5 10"><path d="M0 3l2.500-2.500 2.500 2.500zM0 7l2.500 2.500 2.500-2.500z" fill="#000"/></svg>
<div class="dt" style="left:908px;top:487px">个脉冲<i>/s</i></div>
<div class="dt db" style="left:790px;top:524px;font-size:13px">最小值</div>
<div class="dt" style="left:817px;top:547px">根据您输入的 <u>MAX_SPEED</u> 值，在运动曲线中可指定的最小速度 <u>(MIN_SPEED)</u> 为<b>:</b></div>
<div class="sunk" style="left:817px;top:579px;width:83px;height:19px;background:#f0f0f0"></div>
<div class="dt" style="left:821px;top:581px;font-size:11px">20</div>
<div class="dt" style="left:909px;top:581px">个脉冲<i>/s</i></div>
<svg style="left:785px;top:558px" width="204" height="60" viewBox="0 0 204 60"><path d="M34 41c-4-1-12-1-20-5c-8-5-10-16-4-22c8-7 26-9 52-10c30-1 50 4 72 6c24 2 50 0 58 8c6 6 4 16-4 20c-14 6-40 6-60 9c-24 4-40 8-70 5c-12-1-20-2-34-7c8 0 12-2 12-6" stroke="#ff0a0a" stroke-width="1.800" fill="none"/></svg>
<div class="dt db" style="left:790px;top:617px;font-size:13px">启动<i style="font-size:13px;letter-spacing:0;padding:0 1px">/</i>停止</div>
<div class="dt" style="left:817px;top:639px">电机的启动<i>/</i>停止速度 <u>(SS_SPEED)</u> 为<b>?</b></div>
<div class="sunk" style="left:817px;top:656px;width:83px;height:18px"></div><div class="dt" style="left:821px;top:657px;font-size:11px">1000</div><div class="a" style="left:882px;top:658px;width:16px;height:7px;background:#f0f0f0;border:1px solid;border-color:#fff #6a6a6a #6a6a6a #fff"></div><div class="a" style="left:882px;top:665px;width:16px;height:7px;background:#f0f0f0;border:1px solid;border-color:#fff #6a6a6a #6a6a6a #fff"></div><svg style="left:888px;top:660px" width="5" height="10" viewBox="0 0 5 10"><path d="M0 3l2.500-2.500 2.500 2.500zM0 7l2.500 2.500 2.500-2.500z" fill="#000"/></svg>
<div class="dt" style="left:909px;top:658px">个脉冲<i>/s</i></div>
<div class="a" style="left:790px;top:713px;width:519px;height:2px;background:#a0a0a0;border-bottom:1px solid #fff"></div>
<div class="btn" style="left:790px;top:724px;width:90px">&lt; 上一个</div>
<div class="btn" style="left:885px;top:724px;width:90px">下一个 &gt;</div>
<div class="btn" style="left:1125px;top:724px;width:90px;outline:1px solid #000;outline-offset:0">生成</div>
<div class="btn" style="left:1221px;top:724px;width:90px">取消</div>
</body></html>
